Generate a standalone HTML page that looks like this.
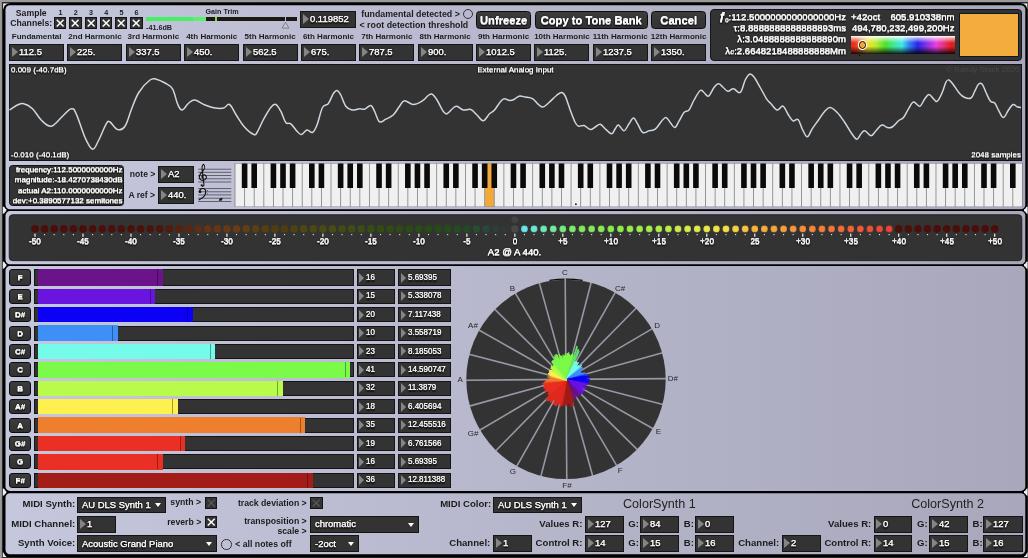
<!DOCTYPE html>
<html><head><meta charset="utf-8"><title>Tuner</title>
<style>
*{margin:0;padding:0;box-sizing:border-box}
html,body{width:1028px;height:558px;overflow:hidden;background:#000;font-family:"Liberation Sans",sans-serif}
#root{position:relative;width:1028px;height:558px;background:#000;overflow:hidden;will-change:transform}
.abs,.t,.nb,.dd,.btn,.cb,.panel{position:absolute}
.panel{background:linear-gradient(to right,#c5c7dd 0%,#a8a7b9 100%);border-radius:4px}
.t{white-space:nowrap;color:#1c1c1c;line-height:1}
.l8{font-size:8px;font-weight:bold}
.l7{font-size:7.2px;font-weight:bold}
.l87{font-size:8.7px;font-weight:bold}
.l9{font-size:9.6px;font-weight:bold}
.w8{font-size:8px;color:#fff;text-shadow:0 0.55px 0 rgba(255,255,255,.75),0 -0.3px 0 rgba(255,255,255,.4),0 0 1.5px #000,0 1.5px 1.5px #000}
.w9{font-size:9.6px;color:#fff;text-shadow:0 0.55px 0 rgba(255,255,255,.75),0 -0.3px 0 rgba(255,255,255,.4),0 0 1.5px #000,0 1.5px 1.5px #000}
.nb{background:#333;border:1px solid #151515;color:#fff;font-size:9.6px;overflow:hidden}
.nb i{position:absolute;left:1.8px;top:50%;margin-top:-5.3px;width:0;height:0;border-left:6.2px solid #858585;border-top:5.3px solid transparent;border-bottom:5.3px solid transparent}
.nb span{transform:scaleX(0.955);transform-origin:0 50%;position:absolute;left:8.8px;top:50%;margin-top:-6.5px;line-height:11px;font-size:9.9px;text-shadow:0 0.4px 0 rgba(255,255,255,.45),0 0 1.5px #000,0 1.5px 1.5px #000;white-space:nowrap;-webkit-text-stroke:0.25px #fff}

.nb.s span{font-size:8.6px;transform:scaleX(0.93);margin-top:-5.9px;left:8.6px;-webkit-text-stroke:0.2px #fff}
.nb.s i{margin-top:-5px;border-left-width:5.8px;border-top-width:5px;border-bottom-width:5px}
.dd{background:#333;border:1px solid #151515;color:#fff;font-size:9.6px;overflow:hidden}
.dd span{transform:scaleX(0.955);transform-origin:0 50%;position:absolute;left:3.6px;top:50%;margin-top:-5.9px;line-height:11px;font-size:9.9px;text-shadow:0 0.4px 0 rgba(255,255,255,.45),0 0 1.5px #000,0 1.5px 1.5px #000;white-space:nowrap;-webkit-text-stroke:0.25px #fff}
.dd i{position:absolute;right:4.2px;top:50%;margin-top:-1.8px;width:0;height:0;border-top:4.2px solid #fff;border-left:3.8px solid transparent;border-right:3.8px solid transparent}
.btn{background:linear-gradient(#3c3c3c,#323232);border:1px solid #0c0c0c;border-radius:3.5px;color:#fff;font-size:11.2px;font-weight:bold;text-align:center;text-shadow:0 0.55px 0 rgba(255,255,255,.75),0 -0.3px 0 rgba(255,255,255,.4),0 0 1.5px #000,0 1.5px 1.5px #000}
.cb{background:#333;border:1px solid #151515}
</style></head><body><div id="root">

<svg class="abs" style="left:0;top:0" width="1028" height="558" viewBox="0 0 1028 558"><defs><linearGradient id="pg" x1="0" y1="0" x2="1" y2="0"><stop offset="0" stop-color="#c5c7dd"/><stop offset="1" stop-color="#a8a7bb"/></linearGradient></defs><rect x="0" y="0" width="1028" height="558" fill="#000"/><rect x="0" y="0" width="1028" height="3.3" fill="#2a2a2a"/><rect x="0" y="0" width="3" height="558" fill="#2a2a2a"/><rect x="0" y="0" width="1028" height="2" fill="#9a9a9a"/><rect x="0" y="0" width="1.9" height="558" fill="#9a9a9a"/><rect x="1.9" y="557.3" width="1027" height="0.7" fill="#444"/><rect x="1027.3" y="2" width="0.7" height="556" fill="#444"/><rect x="3.1" y="3.4" width="6.5" height="5.5" fill="#ececf2"/><rect x="2.8" y="206.7" width="3.6" height="7" fill="#ececf2"/><rect x="2.8" y="261.7" width="3.6" height="7" fill="#ececf2"/><rect x="2.8" y="488.6" width="3.6" height="7" fill="#ececf2"/><rect x="1020.8" y="3.4" width="6.5" height="5.5" fill="#ececf2"/><rect x="1024" y="206.7" width="3.6" height="7" fill="#ececf2"/><rect x="1024" y="261.7" width="3.6" height="7" fill="#ececf2"/><rect x="1024" y="488.6" width="3.6" height="7" fill="#ececf2"/><rect x="2.8" y="552.5" width="3.6" height="4.5" fill="#ececf2"/><rect x="1024" y="552.5" width="3.6" height="4.5" fill="#ececf2"/><rect x="3.3" y="3.3000000000000003" width="1024.0" height="206.9" rx="6.3" fill="#000"/><rect x="5.5" y="5.2" width="1019.8" height="204.0" rx="4.4" fill="url(#pg)"/><rect x="3.3" y="210.1" width="1024.0" height="55.099999999999994" rx="6.3" fill="#000"/><rect x="5.5" y="211.1" width="1019.8" height="53.099999999999994" rx="4.4" fill="url(#pg)"/><rect x="3.3" y="265.1" width="1024.0" height="226.99999999999994" rx="6.3" fill="#000"/><rect x="5.5" y="266.1" width="1019.8" height="224.79999999999995" rx="4.4" fill="url(#pg)"/><rect x="3.3" y="492.1" width="1024.0" height="65.20000000000003" rx="6.3" fill="#000"/><rect x="5.5" y="493.3" width="1019.8" height="60.900000000000034" rx="4.4" fill="url(#pg)"/><rect x="9.2" y="214.7" width="1012.6" height="46" rx="3.5" fill="#333" stroke="#161616" stroke-width="0.8"/></svg>
<div class="t l9" style="left:15.8px;top:8.8px;font-size:8.7px">Sample</div>
<div class="t l9" style="left:10.2px;top:18.9px;font-size:8.7px">Channels:</div>
<div class="t l7" style="left:58.5px;top:8.5px;">1</div>
<div class="cb" style="left:54.2px;top:17px;width:12.3px;height:12.4px"><svg width="10.3" height="10.4" viewBox="0 0 10.5 10.5" style="position:absolute;left:0;top:0"><path d="M1.8 1.8L8.7 8.7M8.7 1.8L1.8 8.7" stroke="#fff" stroke-width="1.5"/></svg></div>
<div class="t l7" style="left:73.7px;top:8.5px;">2</div>
<div class="cb" style="left:69.4px;top:17px;width:12.3px;height:12.4px"><svg width="10.3" height="10.4" viewBox="0 0 10.5 10.5" style="position:absolute;left:0;top:0"><path d="M1.8 1.8L8.7 8.7M8.7 1.8L1.8 8.7" stroke="#fff" stroke-width="1.5"/></svg></div>
<div class="t l7" style="left:88.89999999999999px;top:8.5px;">3</div>
<div class="cb" style="left:84.6px;top:17px;width:12.3px;height:12.4px"><svg width="10.3" height="10.4" viewBox="0 0 10.5 10.5" style="position:absolute;left:0;top:0"><path d="M1.8 1.8L8.7 8.7M8.7 1.8L1.8 8.7" stroke="#fff" stroke-width="1.5"/></svg></div>
<div class="t l7" style="left:104.2px;top:8.5px;">4</div>
<div class="cb" style="left:99.9px;top:17px;width:12.3px;height:12.4px"><svg width="10.3" height="10.4" viewBox="0 0 10.5 10.5" style="position:absolute;left:0;top:0"><path d="M1.8 1.8L8.7 8.7M8.7 1.8L1.8 8.7" stroke="#fff" stroke-width="1.5"/></svg></div>
<div class="t l7" style="left:119.39999999999999px;top:8.5px;">5</div>
<div class="cb" style="left:115.1px;top:17px;width:12.3px;height:12.4px"><svg width="10.3" height="10.4" viewBox="0 0 10.5 10.5" style="position:absolute;left:0;top:0"><path d="M1.8 1.8L8.7 8.7M8.7 1.8L1.8 8.7" stroke="#fff" stroke-width="1.5"/></svg></div>
<div class="t l7" style="left:134.60000000000002px;top:8.5px;">6</div>
<div class="cb" style="left:130.3px;top:17px;width:12.3px;height:12.4px"><svg width="10.3" height="10.4" viewBox="0 0 10.5 10.5" style="position:absolute;left:0;top:0"><path d="M1.8 1.8L8.7 8.7M8.7 1.8L1.8 8.7" stroke="#fff" stroke-width="1.5"/></svg></div>
<div class="abs" style="left:146px;top:17px;width:138.7px;height:4px;background:#1a1a12"></div>
<div class="abs" style="left:286px;top:17px;width:11px;height:4px;background:#1a1a12"></div>
<div class="abs" style="left:146px;top:17px;width:47px;height:4px;background:#45f062"></div>
<div class="abs" style="left:193px;top:17px;width:13px;height:4px;background:#5af070"></div>
<div class="abs" style="left:215px;top:17px;width:2px;height:4px;background:#7ee040"></div>
<svg class="abs" style="left:281px;top:21px" width="9" height="8" viewBox="0 0 9 8"><path d="M4.5 1.2L7.9 7.1H1.1Z" fill="#c6c6d2" stroke="#80808a" stroke-width="1"/></svg>
<div class="t l7" style="left:205.5px;top:8.3px;">Gain Trim</div>
<div class="t l7" style="left:146px;top:24.1px;">-41.6dB</div>
<div class="nb" style="left:300.3px;top:11px;width:56px;height:17px;"><i></i><span>0.119852</span></div>
<div class="t l9" style="left:361.3px;top:9.8px;font-size:8.8px">fundamental detected &gt;</div>
<div class="t l9" style="left:359.5px;top:20.6px;font-size:8.8px">&lt; root detection threshold</div>
<div class="abs" style="left:462.5px;top:8.7px;width:10.5px;height:10.5px;border-radius:50%;border:1px solid #333"></div>
<div class="btn" style="left:476px;top:11px;width:55.3px;height:18px;line-height:16.5px">Unfreeze</div>
<div class="btn" style="left:534.5px;top:11px;width:113.5px;height:18px;line-height:16.5px">Copy to Tone Bank</div>
<div class="btn" style="left:651px;top:11px;width:55.3px;height:18px;line-height:16.5px">Cancel</div>
<div class="t l8" style="left:8.9px;top:33px;width:55.5px;text-align:center;">Fundamental</div>
<div class="nb" style="left:9px;top:44px;width:55px;height:17px;"><i></i><span>112.5</span></div>
<div class="t l8" style="left:67.25999999999999px;top:33px;width:55.5px;text-align:center;">2nd Harmonic</div>
<div class="nb" style="left:67px;top:44px;width:55px;height:17px;"><i></i><span>225.</span></div>
<div class="t l8" style="left:125.61999999999999px;top:33px;width:55.5px;text-align:center;">3rd Harmonic</div>
<div class="nb" style="left:126px;top:44px;width:55px;height:17px;"><i></i><span>337.5</span></div>
<div class="t l8" style="left:183.98px;top:33px;width:55.5px;text-align:center;">4th Harmonic</div>
<div class="nb" style="left:184px;top:44px;width:55px;height:17px;"><i></i><span>450.</span></div>
<div class="t l8" style="left:242.34px;top:33px;width:55.5px;text-align:center;">5th Harmonic</div>
<div class="nb" style="left:243px;top:44px;width:55px;height:17px;"><i></i><span>562.5</span></div>
<div class="t l8" style="left:300.70000000000005px;top:33px;width:55.5px;text-align:center;">6th Harmonic</div>
<div class="nb" style="left:301px;top:44px;width:55px;height:17px;"><i></i><span>675.</span></div>
<div class="t l8" style="left:359.06px;top:33px;width:55.5px;text-align:center;">7th Harmonic</div>
<div class="nb" style="left:359px;top:44px;width:55px;height:17px;"><i></i><span>787.5</span></div>
<div class="t l8" style="left:417.42px;top:33px;width:55.5px;text-align:center;">8th Harmonic</div>
<div class="nb" style="left:418px;top:44px;width:55px;height:17px;"><i></i><span>900.</span></div>
<div class="t l8" style="left:475.78000000000003px;top:33px;width:55.5px;text-align:center;">9th Harmonic</div>
<div class="nb" style="left:476px;top:44px;width:55px;height:17px;"><i></i><span>1012.5</span></div>
<div class="t l8" style="left:534.14px;top:33px;width:55.5px;text-align:center;">10th Harmonic</div>
<div class="nb" style="left:534px;top:44px;width:55px;height:17px;"><i></i><span>1125.</span></div>
<div class="t l8" style="left:592.5px;top:33px;width:55.5px;text-align:center;">11th Harmonic</div>
<div class="nb" style="left:593px;top:44px;width:55px;height:17px;"><i></i><span>1237.5</span></div>
<div class="t l8" style="left:650.86px;top:33px;width:55.5px;text-align:center;">12th Harmonic</div>
<div class="nb" style="left:651px;top:44px;width:55px;height:17px;"><i></i><span>1350.</span></div>
<div class="abs" style="left:709.7px;top:9px;width:312.5px;height:51.5px;background:#333;border:1px solid #151515;border-radius:4px"></div>
<div class="t w9" style="left:705px;top:11.9px;width:141px;text-align:right;font-size:9.58px;-webkit-text-stroke:0.2px #fff"><i style="font-weight:bold;font-size:11px;line-height:0">&#402;</i><span style="font-size:6px;line-height:0;position:relative;top:2px">0</span>:112.5000000000000000Hz</div>
<div class="t w9" style="left:705px;top:23.1px;width:141px;text-align:right;font-size:9.58px;-webkit-text-stroke:0.2px #fff">&tau;:8.8888888888888893ms</div>
<div class="t w9" style="left:705px;top:34.2px;width:141px;text-align:right;font-size:9.58px;-webkit-text-stroke:0.2px #fff">&lambda;:3.0488888888888890m</div>
<div class="t w9" style="left:705px;top:45.7px;width:141px;text-align:right;font-size:9.58px;-webkit-text-stroke:0.2px #fff">&lambda;<i style="font-size:8px;line-height:0">c</i>:2.6648218488888888Mm</div>
<div class="t w9" style="left:851px;top:11.9px;font-size:9.62px;-webkit-text-stroke:0.2px #fff">+42oct</div>
<div class="t w9" style="left:860px;top:11.9px;width:94.5px;text-align:right;font-size:9.62px;-webkit-text-stroke:0.2px #fff">605.910338nm</div>
<div class="t w9" style="left:850px;top:23.1px;width:104.5px;text-align:right;font-size:9.62px;-webkit-text-stroke:0.2px #fff">494,780,232,499,200Hz</div>
<div class="abs" style="left:851px;top:36px;width:103.5px;height:18px;background:linear-gradient(to bottom,#fff 0%,rgba(255,255,255,.55) 14%,rgba(255,255,255,0) 38%,rgba(0,0,0,0) 58%,rgba(0,0,0,.55) 85%,rgba(0,0,0,.9) 100%),linear-gradient(to right,#e8281c 0%,#ee3a20 5%,#f4e030 16%,#b8ec30 24%,#50e030 33%,#40e8a0 42%,#40e8e8 49%,#3080f0 56%,#2828e8 64%,#8030e8 72%,#e840e0 82%,#e83070 90%,#e02020 96%,#d82020 100%)"></div>
<div class="abs" style="left:859px;top:41.4px;width:7.4px;height:7.4px;border-radius:50%;background:#f4a838;border:1.2px solid #111;box-shadow:0 0 0 1.1px #fff"></div>
<div class="abs" style="left:858.5px;top:54.5px;width:1px;height:1.5px;background:#000"></div>
<div class="abs" style="left:959px;top:13px;width:59.5px;height:43.5px;background:#f4ac3c;border:1px solid #0c1830"></div>
<div class="abs" style="left:8.8px;top:63.8px;width:1013.4px;height:97.4px;background:#333;border:1px solid #151515"></div>
<svg class="abs" style="left:0;top:0" width="1028" height="165" viewBox="0 0 1028 165"><path d="M9.5 110.0C10.9 109.1 14.9 106.1 17.5 105.0C20.1 103.9 21.1 103.1 23.8 103.8C26.4 104.4 29.4 105.8 32.5 108.8C35.6 111.7 37.9 116.8 41.2 120.0C44.6 123.2 47.4 126.9 51.2 126.2C55.1 125.6 58.9 119.4 62.5 116.2C66.1 113.1 68.8 109.2 71.2 108.8C73.7 108.3 73.8 108.6 76.2 113.8C78.7 118.9 82.1 131.1 85.0 137.5C87.9 143.9 90.0 148.8 92.5 149.2C95.0 149.7 96.3 144.6 98.8 140.0C101.2 135.4 104.2 127.0 106.2 123.8C108.3 120.5 108.0 121.0 110.0 122.0C112.0 123.0 114.8 128.7 117.5 129.5C120.2 130.3 122.5 129.8 125.0 126.2C127.5 122.7 128.8 116.1 131.2 110.0C133.7 103.9 135.4 97.9 138.8 92.5C142.1 87.1 146.8 82.4 150.0 80.0C153.2 77.6 153.6 78.7 156.2 79.2C158.9 79.8 162.1 81.3 165.0 83.0C167.9 84.7 170.2 85.0 172.5 88.8C174.8 92.5 175.8 99.9 177.5 103.8C179.2 107.6 180.0 110.1 182.0 110.0C184.0 109.9 186.4 104.8 188.8 103.0C191.1 101.2 192.1 99.6 195.0 100.0C197.9 100.4 201.4 103.6 205.0 105.0C208.6 106.4 211.6 107.5 215.0 108.0C218.4 108.5 221.1 108.6 223.8 108.0C226.4 107.4 227.2 103.2 229.5 104.5C231.8 105.8 233.7 111.1 236.2 115.0C238.8 118.9 240.6 122.7 243.8 126.2C246.9 129.8 251.4 133.4 253.8 134.5C256.1 135.6 255.3 135.1 257.0 132.5C258.7 129.9 260.8 124.5 263.2 120.0C265.7 115.5 268.5 110.3 270.8 107.5C273.0 104.7 273.9 103.8 275.8 104.5C277.6 105.2 278.9 108.0 280.8 111.2C282.6 114.5 283.9 120.2 285.8 122.5C287.6 124.8 288.7 122.2 290.8 123.8C292.8 125.3 295.1 129.3 297.0 131.2C298.9 133.2 299.7 134.7 301.5 134.5C303.3 134.3 305.0 130.4 307.0 130.0C309.0 129.6 310.7 133.4 312.5 132.5C314.3 131.6 315.2 129.5 317.0 125.0C318.8 120.5 320.5 111.3 322.5 107.5C324.5 103.7 326.3 106.2 328.2 103.8C330.2 101.3 331.7 96.1 333.2 93.8C334.8 91.4 335.6 90.3 337.0 90.5C338.4 90.7 339.2 92.2 340.8 95.0C342.3 97.8 343.7 103.5 345.8 106.2C347.8 109.0 349.5 109.5 352.0 110.0C354.5 110.5 357.2 108.9 359.5 108.8C361.8 108.6 362.5 109.8 364.5 109.2C366.5 108.7 368.9 105.1 370.8 105.5C372.6 105.9 372.9 108.3 374.5 111.2C376.1 114.2 377.5 120.3 379.5 121.8C381.5 123.2 383.3 120.5 385.8 119.2C388.2 118.0 390.8 117.3 393.2 115.0C395.7 112.7 397.5 108.8 399.5 106.2C401.5 103.7 402.0 101.1 404.5 100.8C407.0 100.4 410.1 104.4 413.2 104.5C416.4 104.6 419.3 102.9 422.0 101.2C424.7 99.6 426.4 96.8 428.2 95.5C430.1 94.2 430.4 93.4 432.0 94.2C433.6 95.1 435.0 96.9 437.0 100.0C439.0 103.1 441.4 108.8 443.2 111.2C445.1 113.7 445.2 114.3 447.0 113.8C448.8 113.2 451.4 109.3 453.2 108.0C455.1 106.7 455.2 105.9 457.0 106.2C458.8 106.6 460.8 109.4 463.2 110.0C465.7 110.6 468.3 108.6 470.8 109.5C473.2 110.4 474.8 113.0 477.0 115.0C479.2 117.0 481.0 121.0 483.2 120.8C485.5 120.5 487.5 115.7 489.5 113.8C491.5 111.8 492.5 112.2 494.5 110.0C496.5 107.8 498.9 103.3 500.8 101.2C502.6 99.2 502.9 98.9 504.5 98.8C506.1 98.6 507.8 100.4 509.5 100.5C511.2 100.6 512.3 100.3 514.0 99.5C515.7 98.7 517.0 96.7 519.0 96.2C521.0 95.8 522.8 96.5 525.2 97.0C527.7 97.5 530.5 97.5 532.8 98.8C535.0 100.0 536.0 102.3 537.8 103.8C539.5 105.2 540.7 107.2 542.8 107.0C544.8 106.8 546.5 104.6 549.0 102.5C551.5 100.4 554.2 97.3 556.5 95.5C558.8 93.7 559.9 92.4 561.5 92.5C563.1 92.6 563.7 93.1 565.2 96.2C566.8 99.4 568.5 105.3 570.2 110.0C572.0 114.7 573.8 119.6 575.2 122.5C576.7 125.4 576.9 125.7 578.5 126.2C580.1 126.8 581.9 124.9 584.0 125.5C586.1 126.1 588.2 129.2 590.2 129.5C592.3 129.8 593.5 127.9 595.2 127.0C597.0 126.1 598.5 123.9 600.2 124.2C602.0 124.6 603.2 127.0 605.2 128.8C607.3 130.5 609.7 133.8 611.5 133.8C613.3 133.8 614.0 130.3 615.2 128.8C616.5 127.2 616.9 124.6 618.5 125.0C620.1 125.4 622.1 131.0 624.0 130.8C625.9 130.5 627.3 126.0 629.0 123.8C630.7 121.5 631.9 117.9 633.5 118.0C635.1 118.1 636.1 121.6 637.8 124.2C639.4 126.9 640.7 131.3 642.8 132.5C644.8 133.7 646.8 131.3 649.0 130.8C651.2 130.2 653.0 131.0 655.2 129.2C657.5 127.5 659.6 123.4 661.5 121.2C663.4 119.1 664.4 117.3 666.0 117.5C667.6 117.7 668.7 120.7 670.2 122.5C671.8 124.3 673.2 127.7 674.8 127.5C676.3 127.3 677.3 124.0 679.0 121.2C680.7 118.5 682.2 114.5 684.0 112.5C685.8 110.5 687.2 112.2 689.0 110.0C690.8 107.8 692.0 103.5 694.0 100.0C696.0 96.5 698.5 91.8 700.2 90.5C702.0 89.2 702.5 91.5 704.0 92.5C705.5 93.5 706.7 97.2 708.5 96.2C710.3 95.3 712.2 89.8 714.0 87.5C715.8 85.2 716.9 83.8 718.5 83.8C720.1 83.7 721.1 85.7 722.8 87.0C724.4 88.3 725.8 90.9 727.8 91.2C729.7 91.6 731.2 88.5 733.5 88.8C735.8 89.0 738.1 94.1 740.2 92.5C742.4 90.9 743.6 83.3 745.2 80.0C746.9 76.7 747.9 74.8 749.5 74.2C751.1 73.7 752.1 74.6 754.0 77.0C755.9 79.4 758.0 83.6 760.2 87.5C762.5 91.4 764.6 95.8 766.5 98.8C768.4 101.7 769.1 101.7 771.0 103.8C772.9 105.8 775.1 109.5 777.2 110.0C779.4 110.5 781.0 105.3 783.0 106.2C785.0 107.2 786.7 112.4 788.5 115.0C790.3 117.6 791.3 119.9 793.0 120.8C794.7 121.6 796.3 118.1 798.0 119.5C799.7 120.9 800.6 125.6 802.2 128.8C803.9 131.9 805.5 136.8 807.2 136.8C809.0 136.8 810.2 131.8 812.2 128.8C814.3 125.7 816.2 123.2 818.5 120.0C820.8 116.8 822.6 113.5 824.8 111.2C826.9 109.0 828.0 107.3 830.2 107.5C832.5 107.7 834.6 109.8 837.2 112.5C839.9 115.2 842.3 118.9 844.8 122.5C847.2 126.1 848.8 129.5 851.0 132.5C853.2 135.5 855.0 139.0 856.8 139.2C858.5 139.5 859.6 135.3 861.0 133.8C862.4 132.2 863.0 130.4 864.8 130.8C866.5 131.1 869.0 135.8 871.0 135.8C873.0 135.8 874.1 132.7 876.0 130.8C877.9 128.8 879.7 125.6 881.8 125.0C883.8 124.4 885.4 127.1 887.2 127.5C889.1 127.9 890.2 128.2 892.2 127.0C894.3 125.8 896.5 122.5 898.5 120.8C900.5 119.0 901.7 119.7 903.5 117.5C905.3 115.3 906.7 111.5 908.5 108.8C910.3 106.0 911.5 102.5 913.5 102.0C915.5 101.5 917.7 106.8 919.8 106.2C921.8 105.7 923.1 100.9 924.8 98.8C926.4 96.6 927.4 94.5 929.0 94.5C930.6 94.5 932.0 97.5 933.5 98.8C935.0 100.0 935.7 102.4 937.2 101.2C938.8 100.1 940.7 96.0 942.2 92.5C943.8 89.0 944.8 84.2 946.0 82.0C947.2 79.8 947.6 79.5 949.0 80.0C950.4 80.5 951.6 82.5 953.5 85.0C955.4 87.5 957.7 91.5 959.8 93.8C961.8 96.0 962.7 96.7 964.8 97.5C966.8 98.3 969.2 99.1 971.0 98.0C972.8 96.9 973.4 93.7 974.8 91.2C976.1 88.8 977.1 85.5 978.5 84.2C979.9 83.0 980.9 82.8 982.2 84.2C983.6 85.7 984.5 89.4 986.0 92.5C987.5 95.6 988.9 99.4 990.5 101.2C992.1 103.1 993.2 101.2 994.8 103.0C996.3 104.8 997.4 108.6 999.0 111.2C1000.6 113.9 1001.8 117.7 1003.5 117.5C1005.2 117.3 1006.8 112.3 1008.5 110.0C1010.2 107.7 1011.4 105.1 1013.0 104.5C1014.6 103.9 1015.8 106.2 1017.2 106.8C1018.7 107.3 1020.3 107.4 1021.0 107.5" fill="none" stroke="#ced7df" stroke-width="1.5" stroke-linejoin="round"/></svg>
<div class="t w8" style="left:11px;top:66.3px;">0.009 (-40.7dB)</div>
<div class="t w8" style="left:11px;top:151.3px;">-0.010 (-40.1dB)</div>
<div class="t w8" style="left:477.5px;top:66.3px;">External Analog Input</div>
<div class="t w8" style="left:921px;top:151.3px;width:100px;text-align:right;">2048 samples</div>
<div class="t l8" style="left:919.5px;top:66.3px;width:100px;text-align:right;font-weight:normal;color:#484848">&copy; Randy Stack 2020</div>
<div class="abs" style="left:9.3px;top:164.5px;width:115.2px;height:41px;background:#333;border:1px solid #151515;border-radius:3.5px"></div>
<div class="t w8" style="left:8px;top:165.8px;width:114.5px;text-align:right;-webkit-text-stroke:0.2px #fff;letter-spacing:0">frequency:112.5000000000Hz</div>
<div class="t w8" style="left:8px;top:176.3px;width:114.5px;text-align:right;-webkit-text-stroke:0.2px #fff;letter-spacing:0">magnitude:-18.4270738430dB</div>
<div class="t w8" style="left:8px;top:186.8px;width:114.5px;text-align:right;-webkit-text-stroke:0.2px #fff;letter-spacing:0">actual A2:110.0000000000Hz</div>
<div class="t w8" style="left:8px;top:197.3px;width:114.5px;text-align:right;-webkit-text-stroke:0.2px #fff;letter-spacing:0">dev:+0.3890577132 semitones</div>
<div class="t l8" style="left:129.8px;top:170px;font-size:8.6px">note &gt;</div>
<div class="t l8" style="left:128.4px;top:191px;font-size:8.6px">A ref &gt;</div>
<div class="nb" style="left:158.2px;top:166px;width:36.3px;height:16.7px;"><i></i><span>A2</span></div>
<div class="nb" style="left:158.2px;top:187.1px;width:36.3px;height:16.7px;"><i></i><span>440.</span></div>
<svg class="abs" style="left:196px;top:162px" width="38" height="46" viewBox="196 162 38 46"><rect x="198.1" y="168.75" width="33.2" height="0.9" fill="#555560"/><rect x="198.1" y="171.85000000000002" width="33.2" height="0.9" fill="#555560"/><rect x="198.1" y="175.05" width="33.2" height="0.9" fill="#555560"/><rect x="198.1" y="178.35000000000002" width="33.2" height="0.9" fill="#555560"/><rect x="198.1" y="181.55" width="33.2" height="0.9" fill="#555560"/><rect x="198.1" y="188.15" width="33.2" height="0.9" fill="#555560"/><rect x="198.1" y="191.35000000000002" width="33.2" height="0.9" fill="#555560"/><rect x="198.1" y="194.45000000000002" width="33.2" height="0.9" fill="#555560"/><rect x="198.1" y="197.75" width="33.2" height="0.9" fill="#555560"/><rect x="198.1" y="201.05" width="33.2" height="0.9" fill="#555560"/><path d="M201.8 185.600C202.5 186.900 204.400 186.300 203.900 184L202.200 170.500C201.800 167.500 202.600 164.800 203.600 164.300C205 165.500 205 168.300 203.200 170.600C201 173.300 199 174.800 199.300 177.300C199.600 179.600 201.800 180.800 203.800 180.300C205.800 179.800 206.800 178.100 206.300 176.500C205.800 175 204.300 174.500 203 175C201.800 175.600 201.600 177 202.400 177.900" fill="none" stroke="#0e0e0e" stroke-width="1.05" stroke-linecap="round" stroke-linejoin="round"/><circle cx="201.700" cy="185.200" r="1.050" fill="#0e0e0e"/><path d="M199.500 191.900c.1-2.300 1.700-3.500 3.500-3.400 1.900.1 2.900 1.700 2.700 4-.3 3.100-2.800 5.500-6.500 7.300" fill="none" stroke="#0e0e0e" stroke-width="1.150" stroke-linecap="round"/><circle cx="200.100" cy="191.800" r="1.250" fill="#0e0e0e"/><circle cx="207.400" cy="190.600" r="0.550" fill="#444"/><circle cx="207.400" cy="193.700" r="0.550" fill="#444"/><path d="M219.100 200.500L219.900 198.500L222.400 198.300L221.500 200.400Z" fill="#0e0e0e" stroke="#0e0e0e" stroke-width="0.400" stroke-linejoin="round"/></svg>
<svg class="abs" style="left:0;top:0" width="1028" height="210" viewBox="0 0 1028 210"><rect x="234.5" y="163.2" width="788.4" height="43.800" fill="#888c90"/><rect x="235.45" y="163.7" width="8.70" height="42.8" fill="#f0f0f0"/><rect x="245.05" y="163.7" width="8.70" height="42.8" fill="#f0f0f0"/><rect x="254.65" y="163.7" width="8.70" height="42.8" fill="#f0f0f0"/><rect x="264.26" y="163.7" width="8.70" height="42.8" fill="#f0f0f0"/><rect x="273.86" y="163.7" width="8.70" height="42.8" fill="#f0f0f0"/><rect x="283.46" y="163.7" width="8.70" height="42.8" fill="#f0f0f0"/><rect x="293.06" y="163.7" width="8.70" height="42.8" fill="#f0f0f0"/><rect x="302.67" y="163.7" width="8.70" height="42.8" fill="#f0f0f0"/><rect x="312.27" y="163.7" width="8.70" height="42.8" fill="#f0f0f0"/><rect x="321.87" y="163.7" width="8.70" height="42.8" fill="#f0f0f0"/><rect x="331.47" y="163.7" width="8.70" height="42.8" fill="#f0f0f0"/><rect x="341.08" y="163.7" width="8.70" height="42.8" fill="#f0f0f0"/><rect x="350.68" y="163.7" width="8.70" height="42.8" fill="#f0f0f0"/><rect x="360.28" y="163.7" width="8.70" height="42.8" fill="#f0f0f0"/><rect x="369.88" y="163.7" width="8.70" height="42.8" fill="#f0f0f0"/><rect x="379.49" y="163.7" width="8.70" height="42.8" fill="#f0f0f0"/><rect x="389.09" y="163.7" width="8.70" height="42.8" fill="#f0f0f0"/><rect x="398.69" y="163.7" width="8.70" height="42.8" fill="#f0f0f0"/><rect x="408.29" y="163.7" width="8.70" height="42.8" fill="#f0f0f0"/><rect x="417.90" y="163.7" width="8.70" height="42.8" fill="#f0f0f0"/><rect x="427.50" y="163.7" width="8.70" height="42.8" fill="#f0f0f0"/><rect x="437.10" y="163.7" width="8.70" height="42.8" fill="#f0f0f0"/><rect x="446.70" y="163.7" width="8.70" height="42.8" fill="#f0f0f0"/><rect x="456.31" y="163.7" width="8.70" height="42.8" fill="#f0f0f0"/><rect x="465.91" y="163.7" width="8.70" height="42.8" fill="#f0f0f0"/><rect x="475.51" y="163.7" width="8.70" height="42.8" fill="#f0f0f0"/><rect x="485.11" y="163.7" width="8.70" height="42.8" fill="#f4a838"/><rect x="494.72" y="163.7" width="8.70" height="42.8" fill="#f0f0f0"/><rect x="504.32" y="163.7" width="8.70" height="42.8" fill="#f0f0f0"/><rect x="513.92" y="163.7" width="8.70" height="42.8" fill="#f0f0f0"/><rect x="523.52" y="163.7" width="8.70" height="42.8" fill="#f0f0f0"/><rect x="533.13" y="163.7" width="8.70" height="42.8" fill="#f0f0f0"/><rect x="542.73" y="163.7" width="8.70" height="42.8" fill="#f0f0f0"/><rect x="552.33" y="163.7" width="8.70" height="42.8" fill="#f0f0f0"/><rect x="561.93" y="163.7" width="8.70" height="42.8" fill="#f0f0f0"/><rect x="571.54" y="163.7" width="8.70" height="42.8" fill="#f0f0f0"/><rect x="581.14" y="163.7" width="8.70" height="42.8" fill="#f0f0f0"/><rect x="590.74" y="163.7" width="8.70" height="42.8" fill="#f0f0f0"/><rect x="600.34" y="163.7" width="8.70" height="42.8" fill="#f0f0f0"/><rect x="609.95" y="163.7" width="8.70" height="42.8" fill="#f0f0f0"/><rect x="619.55" y="163.7" width="8.70" height="42.8" fill="#f0f0f0"/><rect x="629.15" y="163.7" width="8.70" height="42.8" fill="#f0f0f0"/><rect x="638.75" y="163.7" width="8.70" height="42.8" fill="#f0f0f0"/><rect x="648.35" y="163.7" width="8.70" height="42.8" fill="#f0f0f0"/><rect x="657.96" y="163.7" width="8.70" height="42.8" fill="#f0f0f0"/><rect x="667.56" y="163.7" width="8.70" height="42.8" fill="#f0f0f0"/><rect x="677.16" y="163.7" width="8.70" height="42.8" fill="#f0f0f0"/><rect x="686.76" y="163.7" width="8.70" height="42.8" fill="#f0f0f0"/><rect x="696.37" y="163.7" width="8.70" height="42.8" fill="#f0f0f0"/><rect x="705.97" y="163.7" width="8.70" height="42.8" fill="#f0f0f0"/><rect x="715.57" y="163.7" width="8.70" height="42.8" fill="#f0f0f0"/><rect x="725.17" y="163.7" width="8.70" height="42.8" fill="#f0f0f0"/><rect x="734.78" y="163.7" width="8.70" height="42.8" fill="#f0f0f0"/><rect x="744.38" y="163.7" width="8.70" height="42.8" fill="#f0f0f0"/><rect x="753.98" y="163.7" width="8.70" height="42.8" fill="#f0f0f0"/><rect x="763.58" y="163.7" width="8.70" height="42.8" fill="#f0f0f0"/><rect x="773.19" y="163.7" width="8.70" height="42.8" fill="#f0f0f0"/><rect x="782.79" y="163.7" width="8.70" height="42.8" fill="#f0f0f0"/><rect x="792.39" y="163.7" width="8.70" height="42.8" fill="#f0f0f0"/><rect x="801.99" y="163.7" width="8.70" height="42.8" fill="#f0f0f0"/><rect x="811.60" y="163.7" width="8.70" height="42.8" fill="#f0f0f0"/><rect x="821.20" y="163.7" width="8.70" height="42.8" fill="#f0f0f0"/><rect x="830.80" y="163.7" width="8.70" height="42.8" fill="#f0f0f0"/><rect x="840.40" y="163.7" width="8.70" height="42.8" fill="#f0f0f0"/><rect x="850.01" y="163.7" width="8.70" height="42.8" fill="#f0f0f0"/><rect x="859.61" y="163.7" width="8.70" height="42.8" fill="#f0f0f0"/><rect x="869.21" y="163.7" width="8.70" height="42.8" fill="#f0f0f0"/><rect x="878.81" y="163.7" width="8.70" height="42.8" fill="#f0f0f0"/><rect x="888.42" y="163.7" width="8.70" height="42.8" fill="#f0f0f0"/><rect x="898.02" y="163.7" width="8.70" height="42.8" fill="#f0f0f0"/><rect x="907.62" y="163.7" width="8.70" height="42.8" fill="#f0f0f0"/><rect x="917.22" y="163.7" width="8.70" height="42.8" fill="#f0f0f0"/><rect x="926.83" y="163.7" width="8.70" height="42.8" fill="#f0f0f0"/><rect x="936.43" y="163.7" width="8.70" height="42.8" fill="#f0f0f0"/><rect x="946.03" y="163.7" width="8.70" height="42.8" fill="#f0f0f0"/><rect x="955.63" y="163.7" width="8.70" height="42.8" fill="#f0f0f0"/><rect x="965.24" y="163.7" width="8.70" height="42.8" fill="#f0f0f0"/><rect x="974.84" y="163.7" width="8.70" height="42.8" fill="#f0f0f0"/><rect x="984.44" y="163.7" width="8.70" height="42.8" fill="#f0f0f0"/><rect x="994.04" y="163.7" width="8.70" height="42.8" fill="#f0f0f0"/><rect x="1003.65" y="163.7" width="8.70" height="42.8" fill="#f0f0f0"/><rect x="1013.25" y="163.7" width="8.70" height="42.8" fill="#f0f0f0"/><rect x="241.80" y="163.5" width="5.6" height="24.5" fill="#0c0a08"/><rect x="251.40" y="163.5" width="5.6" height="24.5" fill="#0c0a08"/><rect x="270.61" y="163.5" width="5.6" height="24.5" fill="#0c0a08"/><rect x="280.21" y="163.5" width="5.6" height="24.5" fill="#0c0a08"/><rect x="289.81" y="163.5" width="5.6" height="24.5" fill="#0c0a08"/><rect x="309.02" y="163.5" width="5.6" height="24.5" fill="#0c0a08"/><rect x="318.62" y="163.5" width="5.6" height="24.5" fill="#0c0a08"/><rect x="337.83" y="163.5" width="5.6" height="24.5" fill="#0c0a08"/><rect x="347.43" y="163.5" width="5.6" height="24.5" fill="#0c0a08"/><rect x="357.03" y="163.5" width="5.6" height="24.5" fill="#0c0a08"/><rect x="376.24" y="163.5" width="5.6" height="24.5" fill="#0c0a08"/><rect x="385.84" y="163.5" width="5.6" height="24.5" fill="#0c0a08"/><rect x="405.04" y="163.5" width="5.6" height="24.5" fill="#0c0a08"/><rect x="414.65" y="163.5" width="5.6" height="24.5" fill="#0c0a08"/><rect x="424.25" y="163.5" width="5.6" height="24.5" fill="#0c0a08"/><rect x="443.45" y="163.5" width="5.6" height="24.5" fill="#0c0a08"/><rect x="453.06" y="163.5" width="5.6" height="24.5" fill="#0c0a08"/><rect x="472.26" y="163.5" width="5.6" height="24.5" fill="#0c0a08"/><rect x="481.86" y="163.5" width="5.6" height="24.5" fill="#0c0a08"/><rect x="491.47" y="163.5" width="5.6" height="24.5" fill="#0c0a08"/><rect x="510.67" y="163.5" width="5.6" height="24.5" fill="#0c0a08"/><rect x="520.27" y="163.5" width="5.6" height="24.5" fill="#0c0a08"/><rect x="539.48" y="163.5" width="5.6" height="24.5" fill="#0c0a08"/><rect x="549.08" y="163.5" width="5.6" height="24.5" fill="#0c0a08"/><rect x="558.68" y="163.5" width="5.6" height="24.5" fill="#0c0a08"/><rect x="577.89" y="163.5" width="5.6" height="24.5" fill="#0c0a08"/><rect x="587.49" y="163.5" width="5.6" height="24.5" fill="#0c0a08"/><rect x="606.70" y="163.5" width="5.6" height="24.5" fill="#0c0a08"/><rect x="616.30" y="163.5" width="5.6" height="24.5" fill="#0c0a08"/><rect x="625.90" y="163.5" width="5.6" height="24.5" fill="#0c0a08"/><rect x="645.10" y="163.5" width="5.6" height="24.5" fill="#0c0a08"/><rect x="654.71" y="163.5" width="5.6" height="24.5" fill="#0c0a08"/><rect x="673.91" y="163.5" width="5.6" height="24.5" fill="#0c0a08"/><rect x="683.51" y="163.5" width="5.6" height="24.5" fill="#0c0a08"/><rect x="693.12" y="163.5" width="5.6" height="24.5" fill="#0c0a08"/><rect x="712.32" y="163.5" width="5.6" height="24.5" fill="#0c0a08"/><rect x="721.92" y="163.5" width="5.6" height="24.5" fill="#0c0a08"/><rect x="741.13" y="163.5" width="5.6" height="24.5" fill="#0c0a08"/><rect x="750.73" y="163.5" width="5.6" height="24.5" fill="#0c0a08"/><rect x="760.33" y="163.5" width="5.6" height="24.5" fill="#0c0a08"/><rect x="779.54" y="163.5" width="5.6" height="24.5" fill="#0c0a08"/><rect x="789.14" y="163.5" width="5.6" height="24.5" fill="#0c0a08"/><rect x="808.35" y="163.5" width="5.6" height="24.5" fill="#0c0a08"/><rect x="817.95" y="163.5" width="5.6" height="24.5" fill="#0c0a08"/><rect x="827.55" y="163.5" width="5.6" height="24.5" fill="#0c0a08"/><rect x="846.76" y="163.5" width="5.6" height="24.5" fill="#0c0a08"/><rect x="856.36" y="163.5" width="5.6" height="24.5" fill="#0c0a08"/><rect x="875.56" y="163.5" width="5.6" height="24.5" fill="#0c0a08"/><rect x="885.17" y="163.5" width="5.6" height="24.5" fill="#0c0a08"/><rect x="894.77" y="163.5" width="5.6" height="24.5" fill="#0c0a08"/><rect x="913.97" y="163.5" width="5.6" height="24.5" fill="#0c0a08"/><rect x="923.58" y="163.5" width="5.6" height="24.5" fill="#0c0a08"/><rect x="942.78" y="163.5" width="5.6" height="24.5" fill="#0c0a08"/><rect x="952.38" y="163.5" width="5.6" height="24.5" fill="#0c0a08"/><rect x="961.99" y="163.5" width="5.6" height="24.5" fill="#0c0a08"/><rect x="981.19" y="163.5" width="5.6" height="24.5" fill="#0c0a08"/><rect x="990.79" y="163.5" width="5.6" height="24.5" fill="#0c0a08"/><rect x="1010.00" y="163.5" width="5.6" height="24.5" fill="#0c0a08"/><circle cx="575.9" cy="204.200" r="0.900" fill="#111"/></svg>
<svg class="abs" style="left:0;top:212px" width="1028" height="52" viewBox="0 212 1028 52"><circle cx="35.00" cy="228.900" r="3.800" fill="rgb(74,15,12)"/><rect x="34.40" y="233.6" width="1.2" height="3.2" fill="#f0f0f0"/><circle cx="44.60" cy="228.900" r="3.800" fill="rgb(74,15,12)"/><rect x="44.05" y="234" width="1.100" height="1.200" fill="#e0e0e0"/><circle cx="54.19" cy="228.900" r="3.800" fill="rgb(74,15,12)"/><rect x="53.64" y="234" width="1.100" height="1.200" fill="#e0e0e0"/><circle cx="63.79" cy="228.900" r="3.800" fill="rgb(74,15,12)"/><rect x="63.24" y="234" width="1.100" height="1.200" fill="#e0e0e0"/><circle cx="73.39" cy="228.900" r="3.800" fill="rgb(74,15,12)"/><rect x="72.84" y="234" width="1.100" height="1.200" fill="#e0e0e0"/><circle cx="82.98" cy="228.900" r="3.800" fill="rgb(74,15,12)"/><rect x="82.39" y="233.6" width="1.2" height="3.2" fill="#f0f0f0"/><circle cx="92.58" cy="228.900" r="3.800" fill="rgb(74,15,12)"/><rect x="92.03" y="234" width="1.100" height="1.200" fill="#e0e0e0"/><circle cx="102.18" cy="228.900" r="3.800" fill="rgb(74,16,12)"/><rect x="101.63" y="234" width="1.100" height="1.200" fill="#e0e0e0"/><circle cx="111.78" cy="228.900" r="3.800" fill="rgb(74,16,12)"/><rect x="111.23" y="234" width="1.100" height="1.200" fill="#e0e0e0"/><circle cx="121.37" cy="228.900" r="3.800" fill="rgb(74,16,12)"/><rect x="120.82" y="234" width="1.100" height="1.200" fill="#e0e0e0"/><circle cx="130.97" cy="228.900" r="3.800" fill="rgb(74,16,12)"/><rect x="130.37" y="233.6" width="1.2" height="3.2" fill="#f0f0f0"/><circle cx="140.57" cy="228.900" r="3.800" fill="rgb(74,18,13)"/><rect x="140.02" y="234" width="1.100" height="1.200" fill="#e0e0e0"/><circle cx="150.16" cy="228.900" r="3.800" fill="rgb(75,20,13)"/><rect x="149.61" y="234" width="1.100" height="1.200" fill="#e0e0e0"/><circle cx="159.76" cy="228.900" r="3.800" fill="rgb(76,22,13)"/><rect x="159.21" y="234" width="1.100" height="1.200" fill="#e0e0e0"/><circle cx="169.36" cy="228.900" r="3.800" fill="rgb(81,27,14)"/><rect x="168.81" y="234" width="1.100" height="1.200" fill="#e0e0e0"/><circle cx="178.95" cy="228.900" r="3.800" fill="rgb(86,32,14)"/><rect x="178.35" y="233.6" width="1.2" height="3.2" fill="#f0f0f0"/><circle cx="188.55" cy="228.900" r="3.800" fill="rgb(91,38,16)"/><rect x="188.00" y="234" width="1.100" height="1.200" fill="#e0e0e0"/><circle cx="198.15" cy="228.900" r="3.800" fill="rgb(96,44,18)"/><rect x="197.60" y="234" width="1.100" height="1.200" fill="#e0e0e0"/><circle cx="207.75" cy="228.900" r="3.800" fill="rgb(101,50,19)"/><rect x="207.20" y="234" width="1.100" height="1.200" fill="#e0e0e0"/><circle cx="217.34" cy="228.900" r="3.800" fill="rgb(101,53,20)"/><rect x="216.79" y="234" width="1.100" height="1.200" fill="#e0e0e0"/><circle cx="226.94" cy="228.900" r="3.800" fill="rgb(102,57,20)"/><rect x="226.34" y="233.6" width="1.2" height="3.2" fill="#f0f0f0"/><circle cx="236.54" cy="228.900" r="3.800" fill="rgb(102,60,20)"/><rect x="235.99" y="234" width="1.100" height="1.200" fill="#e0e0e0"/><circle cx="246.13" cy="228.900" r="3.800" fill="rgb(97,61,20)"/><rect x="245.58" y="234" width="1.100" height="1.200" fill="#e0e0e0"/><circle cx="255.73" cy="228.900" r="3.800" fill="rgb(93,61,19)"/><rect x="255.18" y="234" width="1.100" height="1.200" fill="#e0e0e0"/><circle cx="265.33" cy="228.900" r="3.800" fill="rgb(88,60,18)"/><rect x="264.78" y="234" width="1.100" height="1.200" fill="#e0e0e0"/><circle cx="274.92" cy="228.900" r="3.800" fill="rgb(84,60,18)"/><rect x="274.32" y="233.6" width="1.2" height="3.2" fill="#f0f0f0"/><circle cx="284.52" cy="228.900" r="3.800" fill="rgb(79,61,18)"/><rect x="283.97" y="234" width="1.100" height="1.200" fill="#e0e0e0"/><circle cx="294.12" cy="228.900" r="3.800" fill="rgb(78,66,19)"/><rect x="293.57" y="234" width="1.100" height="1.200" fill="#e0e0e0"/><circle cx="303.72" cy="228.900" r="3.800" fill="rgb(78,70,19)"/><rect x="303.17" y="234" width="1.100" height="1.200" fill="#e0e0e0"/><circle cx="313.31" cy="228.900" r="3.800" fill="rgb(76,72,20)"/><rect x="312.76" y="234" width="1.100" height="1.200" fill="#e0e0e0"/><circle cx="322.91" cy="228.900" r="3.800" fill="rgb(74,74,20)"/><rect x="322.31" y="233.6" width="1.2" height="3.2" fill="#f0f0f0"/><circle cx="332.51" cy="228.900" r="3.800" fill="rgb(71,75,20)"/><rect x="331.96" y="234" width="1.100" height="1.200" fill="#e0e0e0"/><circle cx="342.10" cy="228.900" r="3.800" fill="rgb(67,75,20)"/><rect x="341.55" y="234" width="1.100" height="1.200" fill="#e0e0e0"/><circle cx="351.70" cy="228.900" r="3.800" fill="rgb(64,76,20)"/><rect x="351.15" y="234" width="1.100" height="1.200" fill="#e0e0e0"/><circle cx="361.30" cy="228.900" r="3.800" fill="rgb(59,76,20)"/><rect x="360.75" y="234" width="1.100" height="1.200" fill="#e0e0e0"/><circle cx="370.89" cy="228.900" r="3.800" fill="rgb(54,76,20)"/><rect x="370.29" y="233.6" width="1.2" height="3.2" fill="#f0f0f0"/><circle cx="380.49" cy="228.900" r="3.800" fill="rgb(51,76,20)"/><rect x="379.94" y="234" width="1.100" height="1.200" fill="#e0e0e0"/><circle cx="390.09" cy="228.900" r="3.800" fill="rgb(48,76,20)"/><rect x="389.54" y="234" width="1.100" height="1.200" fill="#e0e0e0"/><circle cx="399.69" cy="228.900" r="3.800" fill="rgb(46,75,20)"/><rect x="399.14" y="234" width="1.100" height="1.200" fill="#e0e0e0"/><circle cx="409.28" cy="228.900" r="3.800" fill="rgb(43,75,20)"/><rect x="408.73" y="234" width="1.100" height="1.200" fill="#e0e0e0"/><circle cx="418.88" cy="228.900" r="3.800" fill="rgb(41,75,20)"/><rect x="418.28" y="233.6" width="1.2" height="3.2" fill="#f0f0f0"/><circle cx="428.48" cy="228.900" r="3.800" fill="rgb(40,75,22)"/><rect x="427.93" y="234" width="1.100" height="1.200" fill="#e0e0e0"/><circle cx="438.07" cy="228.900" r="3.800" fill="rgb(39,75,24)"/><rect x="437.52" y="234" width="1.100" height="1.200" fill="#e0e0e0"/><circle cx="447.67" cy="228.900" r="3.800" fill="rgb(38,75,26)"/><rect x="447.12" y="234" width="1.100" height="1.200" fill="#e0e0e0"/><circle cx="457.27" cy="228.900" r="3.800" fill="rgb(37,75,32)"/><rect x="456.72" y="234" width="1.100" height="1.200" fill="#e0e0e0"/><circle cx="466.86" cy="228.900" r="3.800" fill="rgb(35,74,38)"/><rect x="466.26" y="233.6" width="1.2" height="3.2" fill="#f0f0f0"/><circle cx="476.46" cy="228.900" r="3.600" fill="rgb(35,79,48)"/><rect x="475.91" y="234" width="1.100" height="1.200" fill="#e0e0e0"/><circle cx="486.06" cy="228.900" r="3.600" fill="rgb(38,73,56)"/><rect x="485.51" y="234" width="1.100" height="1.200" fill="#e0e0e0"/><circle cx="495.66" cy="228.900" r="3.600" fill="rgb(44,62,56)"/><rect x="495.11" y="234" width="1.100" height="1.200" fill="#e0e0e0"/><circle cx="505.25" cy="228.900" r="3.600" fill="rgb(48,56,54)"/><rect x="504.70" y="234" width="1.100" height="1.200" fill="#e0e0e0"/><circle cx="514.85" cy="219.800" r="3.500" fill="#414141"/><circle cx="514.85" cy="228.900" r="3.600" fill="#484848"/><rect x="514.25" y="233.6" width="1.2" height="3.2" fill="#f0f0f0"/><circle cx="524.45" cy="228.900" r="3.400" fill="rgb(103,231,231)"/><circle cx="524.45" cy="228.900" r="3.200" fill="none" stroke="rgba(0,0,0,0.12)" stroke-width="0.8"/><rect x="523.90" y="234" width="1.100" height="1.200" fill="#e0e0e0"/><circle cx="534.04" cy="228.900" r="3.400" fill="rgb(106,232,208)"/><circle cx="534.04" cy="228.900" r="3.200" fill="none" stroke="rgba(0,0,0,0.12)" stroke-width="0.8"/><rect x="533.49" y="234" width="1.100" height="1.200" fill="#e0e0e0"/><circle cx="543.64" cy="228.900" r="3.400" fill="rgb(109,233,184)"/><circle cx="543.64" cy="228.900" r="3.200" fill="none" stroke="rgba(0,0,0,0.12)" stroke-width="0.8"/><rect x="543.09" y="234" width="1.100" height="1.200" fill="#e0e0e0"/><circle cx="553.24" cy="228.900" r="3.400" fill="rgb(114,233,156)"/><circle cx="553.24" cy="228.900" r="3.200" fill="none" stroke="rgba(0,0,0,0.12)" stroke-width="0.8"/><rect x="552.69" y="234" width="1.100" height="1.200" fill="#e0e0e0"/><circle cx="562.83" cy="228.900" r="3.400" fill="rgb(118,233,128)"/><circle cx="562.83" cy="228.900" r="3.200" fill="none" stroke="rgba(0,0,0,0.12)" stroke-width="0.8"/><rect x="562.23" y="233.6" width="1.2" height="3.2" fill="#f0f0f0"/><circle cx="572.43" cy="228.900" r="3.400" fill="rgb(123,234,109)"/><circle cx="572.43" cy="228.900" r="3.200" fill="none" stroke="rgba(0,0,0,0.12)" stroke-width="0.8"/><rect x="571.88" y="234" width="1.100" height="1.200" fill="#e0e0e0"/><circle cx="582.03" cy="228.900" r="3.400" fill="rgb(128,235,90)"/><circle cx="582.03" cy="228.900" r="3.200" fill="none" stroke="rgba(0,0,0,0.12)" stroke-width="0.8"/><rect x="581.48" y="234" width="1.100" height="1.200" fill="#e0e0e0"/><circle cx="591.63" cy="228.900" r="3.400" fill="rgb(130,235,85)"/><circle cx="591.63" cy="228.900" r="3.200" fill="none" stroke="rgba(0,0,0,0.12)" stroke-width="0.8"/><rect x="591.08" y="234" width="1.100" height="1.200" fill="#e0e0e0"/><circle cx="601.22" cy="228.900" r="3.400" fill="rgb(133,235,80)"/><circle cx="601.22" cy="228.900" r="3.200" fill="none" stroke="rgba(0,0,0,0.12)" stroke-width="0.8"/><rect x="600.67" y="234" width="1.100" height="1.200" fill="#e0e0e0"/><circle cx="610.82" cy="228.900" r="3.400" fill="rgb(135,235,75)"/><circle cx="610.82" cy="228.900" r="3.200" fill="none" stroke="rgba(0,0,0,0.12)" stroke-width="0.8"/><rect x="610.22" y="233.6" width="1.2" height="3.2" fill="#f0f0f0"/><circle cx="620.42" cy="228.900" r="3.400" fill="rgb(142,236,75)"/><circle cx="620.42" cy="228.900" r="3.200" fill="none" stroke="rgba(0,0,0,0.12)" stroke-width="0.8"/><rect x="619.87" y="234" width="1.100" height="1.200" fill="#e0e0e0"/><circle cx="630.01" cy="228.900" r="3.400" fill="rgb(149,236,75)"/><circle cx="630.01" cy="228.900" r="3.200" fill="none" stroke="rgba(0,0,0,0.12)" stroke-width="0.8"/><rect x="629.46" y="234" width="1.100" height="1.200" fill="#e0e0e0"/><circle cx="639.61" cy="228.900" r="3.400" fill="rgb(156,237,75)"/><circle cx="639.61" cy="228.900" r="3.200" fill="none" stroke="rgba(0,0,0,0.12)" stroke-width="0.8"/><rect x="639.06" y="234" width="1.100" height="1.200" fill="#e0e0e0"/><circle cx="649.21" cy="228.900" r="3.400" fill="rgb(165,237,75)"/><circle cx="649.21" cy="228.900" r="3.200" fill="none" stroke="rgba(0,0,0,0.12)" stroke-width="0.8"/><rect x="648.66" y="234" width="1.100" height="1.200" fill="#e0e0e0"/><circle cx="658.80" cy="228.900" r="3.400" fill="rgb(175,237,75)"/><circle cx="658.80" cy="228.900" r="3.200" fill="none" stroke="rgba(0,0,0,0.12)" stroke-width="0.8"/><rect x="658.20" y="233.6" width="1.2" height="3.2" fill="#f0f0f0"/><circle cx="668.40" cy="228.900" r="3.400" fill="rgb(189,237,75)"/><circle cx="668.40" cy="228.900" r="3.200" fill="none" stroke="rgba(0,0,0,0.12)" stroke-width="0.8"/><rect x="667.85" y="234" width="1.100" height="1.200" fill="#e0e0e0"/><circle cx="678.00" cy="228.900" r="3.400" fill="rgb(203,237,75)"/><circle cx="678.00" cy="228.900" r="3.200" fill="none" stroke="rgba(0,0,0,0.12)" stroke-width="0.8"/><rect x="677.45" y="234" width="1.100" height="1.200" fill="#e0e0e0"/><circle cx="687.60" cy="228.900" r="3.400" fill="rgb(213,236,75)"/><circle cx="687.60" cy="228.900" r="3.200" fill="none" stroke="rgba(0,0,0,0.12)" stroke-width="0.8"/><rect x="687.05" y="234" width="1.100" height="1.200" fill="#e0e0e0"/><circle cx="697.19" cy="228.900" r="3.400" fill="rgb(223,234,75)"/><circle cx="697.19" cy="228.900" r="3.200" fill="none" stroke="rgba(0,0,0,0.12)" stroke-width="0.8"/><rect x="696.64" y="234" width="1.100" height="1.200" fill="#e0e0e0"/><circle cx="706.79" cy="228.900" r="3.400" fill="rgb(233,233,75)"/><circle cx="706.79" cy="228.900" r="3.200" fill="none" stroke="rgba(0,0,0,0.12)" stroke-width="0.8"/><rect x="706.19" y="233.6" width="1.2" height="3.2" fill="#f0f0f0"/><circle cx="716.39" cy="228.900" r="3.400" fill="rgb(239,227,73)"/><circle cx="716.39" cy="228.900" r="3.200" fill="none" stroke="rgba(0,0,0,0.12)" stroke-width="0.8"/><rect x="715.84" y="234" width="1.100" height="1.200" fill="#e0e0e0"/><circle cx="725.98" cy="228.900" r="3.400" fill="rgb(244,222,71)"/><circle cx="725.98" cy="228.900" r="3.200" fill="none" stroke="rgba(0,0,0,0.12)" stroke-width="0.8"/><rect x="725.43" y="234" width="1.100" height="1.200" fill="#e0e0e0"/><circle cx="735.58" cy="228.900" r="3.400" fill="rgb(245,208,70)"/><circle cx="735.58" cy="228.900" r="3.200" fill="none" stroke="rgba(0,0,0,0.12)" stroke-width="0.8"/><rect x="735.03" y="234" width="1.100" height="1.200" fill="#e0e0e0"/><circle cx="745.18" cy="228.900" r="3.400" fill="rgb(246,194,68)"/><circle cx="745.18" cy="228.900" r="3.200" fill="none" stroke="rgba(0,0,0,0.12)" stroke-width="0.8"/><rect x="744.63" y="234" width="1.100" height="1.200" fill="#e0e0e0"/><circle cx="754.77" cy="228.900" r="3.400" fill="rgb(246,180,64)"/><circle cx="754.77" cy="228.900" r="3.200" fill="none" stroke="rgba(0,0,0,0.12)" stroke-width="0.8"/><rect x="754.17" y="233.6" width="1.2" height="3.2" fill="#f0f0f0"/><circle cx="764.37" cy="228.900" r="3.400" fill="rgb(245,173,63)"/><circle cx="764.37" cy="228.900" r="3.200" fill="none" stroke="rgba(0,0,0,0.12)" stroke-width="0.8"/><rect x="763.82" y="234" width="1.100" height="1.200" fill="#e0e0e0"/><circle cx="773.97" cy="228.900" r="3.400" fill="rgb(244,165,62)"/><circle cx="773.97" cy="228.900" r="3.200" fill="none" stroke="rgba(0,0,0,0.12)" stroke-width="0.8"/><rect x="773.42" y="234" width="1.100" height="1.200" fill="#e0e0e0"/><circle cx="783.57" cy="228.900" r="3.400" fill="rgb(244,158,61)"/><circle cx="783.57" cy="228.900" r="3.200" fill="none" stroke="rgba(0,0,0,0.12)" stroke-width="0.8"/><rect x="783.02" y="234" width="1.100" height="1.200" fill="#e0e0e0"/><circle cx="793.16" cy="228.900" r="3.400" fill="rgb(243,150,61)"/><circle cx="793.16" cy="228.900" r="3.200" fill="none" stroke="rgba(0,0,0,0.12)" stroke-width="0.8"/><rect x="792.61" y="234" width="1.100" height="1.200" fill="#e0e0e0"/><circle cx="802.76" cy="228.900" r="3.400" fill="rgb(242,143,60)"/><circle cx="802.76" cy="228.900" r="3.200" fill="none" stroke="rgba(0,0,0,0.12)" stroke-width="0.8"/><rect x="802.16" y="233.6" width="1.2" height="3.2" fill="#f0f0f0"/><circle cx="812.36" cy="228.900" r="3.400" fill="rgb(242,135,59)"/><circle cx="812.36" cy="228.900" r="3.200" fill="none" stroke="rgba(0,0,0,0.12)" stroke-width="0.8"/><rect x="811.81" y="234" width="1.100" height="1.200" fill="#e0e0e0"/><circle cx="821.95" cy="228.900" r="3.400" fill="rgb(241,127,58)"/><circle cx="821.95" cy="228.900" r="3.200" fill="none" stroke="rgba(0,0,0,0.12)" stroke-width="0.8"/><rect x="821.40" y="234" width="1.100" height="1.200" fill="#e0e0e0"/><circle cx="831.55" cy="228.900" r="3.400" fill="rgb(241,118,56)"/><circle cx="831.55" cy="228.900" r="3.200" fill="none" stroke="rgba(0,0,0,0.12)" stroke-width="0.8"/><rect x="831.00" y="234" width="1.100" height="1.200" fill="#e0e0e0"/><circle cx="841.15" cy="228.900" r="3.400" fill="rgb(240,109,54)"/><circle cx="841.15" cy="228.900" r="3.200" fill="none" stroke="rgba(0,0,0,0.12)" stroke-width="0.8"/><rect x="840.60" y="234" width="1.100" height="1.200" fill="#e0e0e0"/><circle cx="850.75" cy="228.900" r="3.400" fill="rgb(239,100,53)"/><circle cx="850.75" cy="228.900" r="3.200" fill="none" stroke="rgba(0,0,0,0.12)" stroke-width="0.8"/><rect x="850.14" y="233.6" width="1.2" height="3.2" fill="#f0f0f0"/><circle cx="860.34" cy="228.900" r="3.400" fill="rgb(238,90,53)"/><circle cx="860.34" cy="228.900" r="3.200" fill="none" stroke="rgba(0,0,0,0.12)" stroke-width="0.8"/><rect x="859.79" y="234" width="1.100" height="1.200" fill="#e0e0e0"/><circle cx="869.94" cy="228.900" r="3.400" fill="rgb(237,81,53)"/><circle cx="869.94" cy="228.900" r="3.200" fill="none" stroke="rgba(0,0,0,0.12)" stroke-width="0.8"/><rect x="869.39" y="234" width="1.100" height="1.200" fill="#e0e0e0"/><circle cx="879.54" cy="228.900" r="3.400" fill="rgb(235,74,53)"/><circle cx="879.54" cy="228.900" r="3.200" fill="none" stroke="rgba(0,0,0,0.12)" stroke-width="0.8"/><rect x="878.99" y="234" width="1.100" height="1.200" fill="#e0e0e0"/><circle cx="889.13" cy="228.900" r="3.400" fill="rgb(233,68,53)"/><circle cx="889.13" cy="228.900" r="3.200" fill="none" stroke="rgba(0,0,0,0.12)" stroke-width="0.8"/><rect x="888.58" y="234" width="1.100" height="1.200" fill="#e0e0e0"/><circle cx="898.73" cy="228.900" r="3.800" fill="rgb(74,16,12)"/><rect x="898.13" y="233.6" width="1.2" height="3.2" fill="#f0f0f0"/><circle cx="908.33" cy="228.900" r="3.800" fill="rgb(74,16,12)"/><rect x="907.78" y="234" width="1.100" height="1.200" fill="#e0e0e0"/><circle cx="917.92" cy="228.900" r="3.800" fill="rgb(74,16,12)"/><rect x="917.37" y="234" width="1.100" height="1.200" fill="#e0e0e0"/><circle cx="927.52" cy="228.900" r="3.800" fill="rgb(74,16,12)"/><rect x="926.97" y="234" width="1.100" height="1.200" fill="#e0e0e0"/><circle cx="937.12" cy="228.900" r="3.800" fill="rgb(74,15,12)"/><rect x="936.57" y="234" width="1.100" height="1.200" fill="#e0e0e0"/><circle cx="946.71" cy="228.900" r="3.800" fill="rgb(74,15,12)"/><rect x="946.11" y="233.6" width="1.2" height="3.2" fill="#f0f0f0"/><circle cx="956.31" cy="228.900" r="3.800" fill="rgb(74,15,12)"/><rect x="955.76" y="234" width="1.100" height="1.200" fill="#e0e0e0"/><circle cx="965.91" cy="228.900" r="3.800" fill="rgb(74,15,12)"/><rect x="965.36" y="234" width="1.100" height="1.200" fill="#e0e0e0"/><circle cx="975.51" cy="228.900" r="3.800" fill="rgb(74,15,12)"/><rect x="974.96" y="234" width="1.100" height="1.200" fill="#e0e0e0"/><circle cx="985.10" cy="228.900" r="3.800" fill="rgb(74,15,12)"/><rect x="984.55" y="234" width="1.100" height="1.200" fill="#e0e0e0"/><circle cx="994.70" cy="228.900" r="3.800" fill="rgb(74,15,12)"/><rect x="994.10" y="233.6" width="1.2" height="3.2" fill="#f0f0f0"/></svg>
<div class="t w8" style="left:15.0px;top:237.2px;width:40px;text-align:center;-webkit-text-stroke:0.2px #fff;font-size:8.7px;transform:scaleX(0.94)">-50</div>
<div class="t w8" style="left:62.985px;top:237.2px;width:40px;text-align:center;-webkit-text-stroke:0.2px #fff;font-size:8.7px;transform:scaleX(0.94)">-45</div>
<div class="t w8" style="left:110.97px;top:237.2px;width:40px;text-align:center;-webkit-text-stroke:0.2px #fff;font-size:8.7px;transform:scaleX(0.94)">-40</div>
<div class="t w8" style="left:158.95499999999998px;top:237.2px;width:40px;text-align:center;-webkit-text-stroke:0.2px #fff;font-size:8.7px;transform:scaleX(0.94)">-35</div>
<div class="t w8" style="left:206.94px;top:237.2px;width:40px;text-align:center;-webkit-text-stroke:0.2px #fff;font-size:8.7px;transform:scaleX(0.94)">-30</div>
<div class="t w8" style="left:254.92499999999995px;top:237.2px;width:40px;text-align:center;-webkit-text-stroke:0.2px #fff;font-size:8.7px;transform:scaleX(0.94)">-25</div>
<div class="t w8" style="left:302.90999999999997px;top:237.2px;width:40px;text-align:center;-webkit-text-stroke:0.2px #fff;font-size:8.7px;transform:scaleX(0.94)">-20</div>
<div class="t w8" style="left:350.895px;top:237.2px;width:40px;text-align:center;-webkit-text-stroke:0.2px #fff;font-size:8.7px;transform:scaleX(0.94)">-15</div>
<div class="t w8" style="left:398.88px;top:237.2px;width:40px;text-align:center;-webkit-text-stroke:0.2px #fff;font-size:8.7px;transform:scaleX(0.94)">-10</div>
<div class="t w8" style="left:446.86499999999995px;top:237.2px;width:40px;text-align:center;-webkit-text-stroke:0.2px #fff;font-size:8.7px;transform:scaleX(0.94)">-5</div>
<div class="t w8" style="left:494.8499999999999px;top:237.2px;width:40px;text-align:center;-webkit-text-stroke:0.2px #fff;font-size:8.7px;transform:scaleX(0.94)">0</div>
<div class="t w8" style="left:542.8349999999999px;top:237.2px;width:40px;text-align:center;-webkit-text-stroke:0.2px #fff;font-size:8.7px;transform:scaleX(0.94)">+5</div>
<div class="t w8" style="left:590.8199999999999px;top:237.2px;width:40px;text-align:center;-webkit-text-stroke:0.2px #fff;font-size:8.7px;transform:scaleX(0.94)">+10</div>
<div class="t w8" style="left:638.805px;top:237.2px;width:40px;text-align:center;-webkit-text-stroke:0.2px #fff;font-size:8.7px;transform:scaleX(0.94)">+15</div>
<div class="t w8" style="left:686.79px;top:237.2px;width:40px;text-align:center;-webkit-text-stroke:0.2px #fff;font-size:8.7px;transform:scaleX(0.94)">+20</div>
<div class="t w8" style="left:734.775px;top:237.2px;width:40px;text-align:center;-webkit-text-stroke:0.2px #fff;font-size:8.7px;transform:scaleX(0.94)">25</div>
<div class="t w8" style="left:782.76px;top:237.2px;width:40px;text-align:center;-webkit-text-stroke:0.2px #fff;font-size:8.7px;transform:scaleX(0.94)">+30</div>
<div class="t w8" style="left:830.745px;top:237.2px;width:40px;text-align:center;-webkit-text-stroke:0.2px #fff;font-size:8.7px;transform:scaleX(0.94)">+35</div>
<div class="t w8" style="left:878.7299999999999px;top:237.2px;width:40px;text-align:center;-webkit-text-stroke:0.2px #fff;font-size:8.7px;transform:scaleX(0.94)">+40</div>
<div class="t w8" style="left:926.7149999999999px;top:237.2px;width:40px;text-align:center;-webkit-text-stroke:0.2px #fff;font-size:8.7px;transform:scaleX(0.94)">+45</div>
<div class="t w8" style="left:974.6999999999999px;top:237.2px;width:40px;text-align:center;-webkit-text-stroke:0.2px #fff;font-size:8.7px;transform:scaleX(0.94)">+50</div>
<div class="t w9" style="left:464.5px;top:247px;width:100px;text-align:center;font-size:9.6px;-webkit-text-stroke:0.25px #fff">A2 @ A 440.</div>
<div class="btn" style="left:9px;top:269.30px;width:22.4px;height:16.7px;font-size:8px;line-height:15.2px;border-radius:3px">F</div>
<div class="abs" style="left:34.2px;top:269.30px;width:319.6px;height:16.7px;background:#333;border:1px solid #151515"></div>
<div class="abs" style="left:38px;top:269.20px;width:124.7px;height:17.1px;background:#6a138a"></div>
<div class="abs" style="left:157.2px;top:269.30px;width:0.8px;height:16.7px;background:rgba(0,0,0,0.35)"></div>
<div class="nb s" style="left:356.7px;top:269.3px;width:38.3px;height:16.7px;"><i></i><span>16</span></div>
<div class="nb s" style="left:398px;top:269.3px;width:52.5px;height:16.7px;"><i></i><span>5.69395</span></div>
<div class="btn" style="left:9px;top:288.70px;width:22.4px;height:15px;font-size:8px;line-height:13.5px;border-radius:3px">E</div>
<div class="abs" style="left:34.2px;top:288.70px;width:319.6px;height:15px;background:#333;border:1px solid #151515"></div>
<div class="abs" style="left:38px;top:288.60px;width:117.2px;height:15.4px;background:#6a14e0"></div>
<div class="abs" style="left:149.7px;top:288.70px;width:0.8px;height:15px;background:rgba(0,0,0,0.35)"></div>
<div class="nb s" style="left:356.7px;top:288.7px;width:38.3px;height:15px;"><i></i><span>15</span></div>
<div class="nb s" style="left:398px;top:288.7px;width:52.5px;height:15px;"><i></i><span>5.338078</span></div>
<div class="btn" style="left:9px;top:307.10px;width:22.4px;height:15px;font-size:8px;line-height:13.5px;border-radius:3px">D#</div>
<div class="abs" style="left:34.2px;top:307.10px;width:319.6px;height:15px;background:#333;border:1px solid #151515"></div>
<div class="abs" style="left:38px;top:307.00px;width:154.7px;height:15.4px;background:#0c00f6"></div>
<div class="abs" style="left:187.2px;top:307.10px;width:0.8px;height:15px;background:rgba(0,0,0,0.35)"></div>
<div class="nb s" style="left:356.7px;top:307.1px;width:38.3px;height:15px;"><i></i><span>20</span></div>
<div class="nb s" style="left:398px;top:307.1px;width:52.5px;height:15px;"><i></i><span>7.117438</span></div>
<div class="btn" style="left:9px;top:325.50px;width:22.4px;height:15px;font-size:8px;line-height:13.5px;border-radius:3px">D</div>
<div class="abs" style="left:34.2px;top:325.50px;width:319.6px;height:15px;background:#333;border:1px solid #151515"></div>
<div class="abs" style="left:38px;top:325.40px;width:79.7px;height:15.4px;background:#3f90f6"></div>
<div class="abs" style="left:112.2px;top:325.50px;width:0.8px;height:15px;background:rgba(0,0,0,0.35)"></div>
<div class="nb s" style="left:356.7px;top:325.5px;width:38.3px;height:15px;"><i></i><span>10</span></div>
<div class="nb s" style="left:398px;top:325.5px;width:52.5px;height:15px;"><i></i><span>3.558719</span></div>
<div class="btn" style="left:9px;top:343.90px;width:22.4px;height:15px;font-size:8px;line-height:13.5px;border-radius:3px">C#</div>
<div class="abs" style="left:34.2px;top:343.90px;width:319.6px;height:15px;background:#333;border:1px solid #151515"></div>
<div class="abs" style="left:38px;top:343.80px;width:177.2px;height:15.4px;background:#74fbe9"></div>
<div class="abs" style="left:209.7px;top:343.90px;width:0.8px;height:15px;background:rgba(0,0,0,0.35)"></div>
<div class="nb s" style="left:356.7px;top:343.9px;width:38.3px;height:15px;"><i></i><span>23</span></div>
<div class="nb s" style="left:398px;top:343.9px;width:52.5px;height:15px;"><i></i><span>8.185053</span></div>
<div class="btn" style="left:9px;top:362.30px;width:22.4px;height:15px;font-size:8px;line-height:13.5px;border-radius:3px">C</div>
<div class="abs" style="left:34.2px;top:362.30px;width:319.6px;height:15px;background:#333;border:1px solid #151515"></div>
<div class="abs" style="left:38px;top:362.20px;width:312.2px;height:15.4px;background:#7cfa4a"></div>
<div class="abs" style="left:344.7px;top:362.30px;width:0.8px;height:15px;background:rgba(0,0,0,0.35)"></div>
<div class="nb s" style="left:356.7px;top:362.3px;width:38.3px;height:15px;"><i></i><span>41</span></div>
<div class="nb s" style="left:398px;top:362.3px;width:52.5px;height:15px;"><i></i><span>14.590747</span></div>
<div class="btn" style="left:9px;top:380.70px;width:22.4px;height:15px;font-size:8px;line-height:13.5px;border-radius:3px">B</div>
<div class="abs" style="left:34.2px;top:380.70px;width:319.6px;height:15px;background:#333;border:1px solid #151515"></div>
<div class="abs" style="left:38px;top:380.60px;width:244.7px;height:15.4px;background:#b9fb4b"></div>
<div class="abs" style="left:277.2px;top:380.70px;width:0.8px;height:15px;background:rgba(0,0,0,0.35)"></div>
<div class="nb s" style="left:356.7px;top:380.7px;width:38.3px;height:15px;"><i></i><span>32</span></div>
<div class="nb s" style="left:398px;top:380.7px;width:52.5px;height:15px;"><i></i><span>11.3879</span></div>
<div class="btn" style="left:9px;top:399.10px;width:22.4px;height:15px;font-size:8px;line-height:13.5px;border-radius:3px">A#</div>
<div class="abs" style="left:34.2px;top:399.10px;width:319.6px;height:15px;background:#333;border:1px solid #151515"></div>
<div class="abs" style="left:38px;top:399.00px;width:139.7px;height:15.4px;background:#fdf04f"></div>
<div class="abs" style="left:172.2px;top:399.10px;width:0.8px;height:15px;background:rgba(0,0,0,0.35)"></div>
<div class="nb s" style="left:356.7px;top:399.1px;width:38.3px;height:15px;"><i></i><span>18</span></div>
<div class="nb s" style="left:398px;top:399.1px;width:52.5px;height:15px;"><i></i><span>6.405694</span></div>
<div class="btn" style="left:9px;top:417.50px;width:22.4px;height:15px;font-size:8px;line-height:13.5px;border-radius:3px">A</div>
<div class="abs" style="left:34.2px;top:417.50px;width:319.6px;height:15px;background:#333;border:1px solid #151515"></div>
<div class="abs" style="left:38px;top:417.40px;width:267.2px;height:15.4px;background:#ee7f2f"></div>
<div class="abs" style="left:299.7px;top:417.50px;width:0.8px;height:15px;background:rgba(0,0,0,0.35)"></div>
<div class="nb s" style="left:356.7px;top:417.5px;width:38.3px;height:15px;"><i></i><span>35</span></div>
<div class="nb s" style="left:398px;top:417.5px;width:52.5px;height:15px;"><i></i><span>12.455516</span></div>
<div class="btn" style="left:9px;top:435.90px;width:22.4px;height:15px;font-size:8px;line-height:13.5px;border-radius:3px">G#</div>
<div class="abs" style="left:34.2px;top:435.90px;width:319.6px;height:15px;background:#333;border:1px solid #151515"></div>
<div class="abs" style="left:38px;top:435.80px;width:147.2px;height:15.4px;background:#ea2f24"></div>
<div class="abs" style="left:179.7px;top:435.90px;width:0.8px;height:15px;background:rgba(0,0,0,0.35)"></div>
<div class="nb s" style="left:356.7px;top:435.9px;width:38.3px;height:15px;"><i></i><span>19</span></div>
<div class="nb s" style="left:398px;top:435.9px;width:52.5px;height:15px;"><i></i><span>6.761566</span></div>
<div class="btn" style="left:9px;top:454.30px;width:22.4px;height:15px;font-size:8px;line-height:13.5px;border-radius:3px">G</div>
<div class="abs" style="left:34.2px;top:454.30px;width:319.6px;height:15px;background:#333;border:1px solid #151515"></div>
<div class="abs" style="left:38px;top:454.20px;width:124.7px;height:15.4px;background:#ea2f24"></div>
<div class="abs" style="left:157.2px;top:454.30px;width:0.8px;height:15px;background:rgba(0,0,0,0.35)"></div>
<div class="nb s" style="left:356.7px;top:454.3px;width:38.3px;height:15px;"><i></i><span>16</span></div>
<div class="nb s" style="left:398px;top:454.3px;width:52.5px;height:15px;"><i></i><span>5.69395</span></div>
<div class="btn" style="left:9px;top:472.70px;width:22.4px;height:15px;font-size:8px;line-height:13.5px;border-radius:3px">F#</div>
<div class="abs" style="left:34.2px;top:472.70px;width:319.6px;height:15px;background:#333;border:1px solid #151515"></div>
<div class="abs" style="left:38px;top:472.60px;width:274.7px;height:15.4px;background:#a31c17"></div>
<div class="abs" style="left:307.2px;top:472.70px;width:0.8px;height:15px;background:rgba(0,0,0,0.35)"></div>
<div class="nb s" style="left:356.7px;top:472.7px;width:38.3px;height:15px;"><i></i><span>36</span></div>
<div class="nb s" style="left:398px;top:472.7px;width:52.5px;height:15px;"><i></i><span>12.811388</span></div>
<svg class="abs" style="left:455px;top:268px" width="222" height="224" viewBox="455 268 222 224"><circle cx="566.0" cy="379.4" r="99.7" fill="#333"/><path d="M549.45 280.48A100.3 100.3 0 0 1 582.55 280.48" stroke="#0c0c0c" stroke-width="1.3" fill="none"/><line x1="566.0" y1="379.4" x2="565.21" y2="278.20" stroke="#b0b0c2" stroke-width="1.6" stroke-opacity="0.8"/><line x1="566.0" y1="379.4" x2="591.42" y2="281.45" stroke="#b0b0c2" stroke-width="1.6" stroke-opacity="0.8"/><line x1="566.0" y1="379.4" x2="615.91" y2="291.36" stroke="#b0b0c2" stroke-width="1.6" stroke-opacity="0.8"/><line x1="566.0" y1="379.4" x2="636.99" y2="307.28" stroke="#b0b0c2" stroke-width="1.6" stroke-opacity="0.8"/><line x1="566.0" y1="379.4" x2="653.24" y2="328.11" stroke="#b0b0c2" stroke-width="1.6" stroke-opacity="0.8"/><line x1="566.0" y1="379.4" x2="663.54" y2="352.44" stroke="#b0b0c2" stroke-width="1.6" stroke-opacity="0.8"/><line x1="566.0" y1="379.4" x2="667.20" y2="378.61" stroke="#b0b0c2" stroke-width="1.6" stroke-opacity="0.8"/><line x1="566.0" y1="379.4" x2="663.95" y2="404.82" stroke="#b0b0c2" stroke-width="1.6" stroke-opacity="0.8"/><line x1="566.0" y1="379.4" x2="654.04" y2="429.31" stroke="#b0b0c2" stroke-width="1.6" stroke-opacity="0.8"/><line x1="566.0" y1="379.4" x2="638.12" y2="450.39" stroke="#b0b0c2" stroke-width="1.6" stroke-opacity="0.8"/><line x1="566.0" y1="379.4" x2="617.29" y2="466.64" stroke="#b0b0c2" stroke-width="1.6" stroke-opacity="0.8"/><line x1="566.0" y1="379.4" x2="592.96" y2="476.94" stroke="#b0b0c2" stroke-width="1.6" stroke-opacity="0.8"/><line x1="566.0" y1="379.4" x2="566.79" y2="480.60" stroke="#b0b0c2" stroke-width="1.6" stroke-opacity="0.8"/><line x1="566.0" y1="379.4" x2="540.58" y2="477.35" stroke="#b0b0c2" stroke-width="1.6" stroke-opacity="0.8"/><line x1="566.0" y1="379.4" x2="516.09" y2="467.44" stroke="#b0b0c2" stroke-width="1.6" stroke-opacity="0.8"/><line x1="566.0" y1="379.4" x2="495.01" y2="451.52" stroke="#b0b0c2" stroke-width="1.6" stroke-opacity="0.8"/><line x1="566.0" y1="379.4" x2="478.76" y2="430.69" stroke="#b0b0c2" stroke-width="1.6" stroke-opacity="0.8"/><line x1="566.0" y1="379.4" x2="468.46" y2="406.36" stroke="#b0b0c2" stroke-width="1.6" stroke-opacity="0.8"/><line x1="566.0" y1="379.4" x2="464.80" y2="380.19" stroke="#b0b0c2" stroke-width="1.6" stroke-opacity="0.8"/><line x1="566.0" y1="379.4" x2="468.05" y2="353.98" stroke="#b0b0c2" stroke-width="1.6" stroke-opacity="0.8"/><line x1="566.0" y1="379.4" x2="477.96" y2="329.49" stroke="#b0b0c2" stroke-width="1.6" stroke-opacity="0.8"/><line x1="566.0" y1="379.4" x2="493.88" y2="308.41" stroke="#b0b0c2" stroke-width="1.6" stroke-opacity="0.8"/><line x1="566.0" y1="379.4" x2="514.71" y2="292.16" stroke="#b0b0c2" stroke-width="1.6" stroke-opacity="0.8"/><line x1="566.0" y1="379.4" x2="539.04" y2="281.86" stroke="#b0b0c2" stroke-width="1.6" stroke-opacity="0.8"/><line x1="566.3" y1="380.0" x2="553.5" y2="364.8" stroke="rgb(154,250,74)" stroke-width="1.3"/><line x1="566.3" y1="380.0" x2="554.2" y2="365.1" stroke="rgb(148,250,74)" stroke-width="1.3"/><line x1="566.3" y1="380.0" x2="551.7" y2="361.5" stroke="rgb(141,250,74)" stroke-width="1.3"/><line x1="566.3" y1="380.0" x2="554.3" y2="364.3" stroke="rgb(134,250,74)" stroke-width="1.3"/><line x1="566.3" y1="380.0" x2="552.0" y2="360.7" stroke="rgb(127,250,74)" stroke-width="1.3"/><line x1="566.3" y1="380.0" x2="553.0" y2="361.3" stroke="rgb(124,250,74)" stroke-width="1.3"/><line x1="566.3" y1="380.0" x2="554.7" y2="363.2" stroke="rgb(124,250,74)" stroke-width="1.3"/><line x1="566.3" y1="380.0" x2="552.9" y2="360.0" stroke="rgb(124,250,74)" stroke-width="1.3"/><line x1="566.3" y1="380.0" x2="555.3" y2="363.0" stroke="rgb(124,250,74)" stroke-width="1.3"/><line x1="566.3" y1="380.0" x2="553.9" y2="360.1" stroke="rgb(124,250,74)" stroke-width="1.3"/><line x1="566.3" y1="380.0" x2="555.7" y2="362.4" stroke="rgb(124,250,74)" stroke-width="1.3"/><line x1="566.3" y1="380.0" x2="555.9" y2="362.1" stroke="rgb(124,250,74)" stroke-width="1.3"/><line x1="566.3" y1="380.0" x2="554.9" y2="359.6" stroke="rgb(124,250,74)" stroke-width="1.3"/><line x1="566.3" y1="380.0" x2="553.7" y2="356.5" stroke="rgb(124,250,74)" stroke-width="1.3"/><line x1="566.3" y1="380.0" x2="556.6" y2="361.4" stroke="rgb(124,250,74)" stroke-width="1.3"/><line x1="566.3" y1="380.0" x2="556.6" y2="360.5" stroke="rgb(124,250,74)" stroke-width="1.3"/><line x1="566.3" y1="380.0" x2="555.5" y2="357.4" stroke="rgb(124,250,74)" stroke-width="1.3"/><line x1="566.3" y1="380.0" x2="554.7" y2="354.9" stroke="rgb(124,250,74)" stroke-width="1.3"/><line x1="566.3" y1="380.0" x2="556.4" y2="357.4" stroke="rgb(124,250,74)" stroke-width="1.3"/><line x1="566.3" y1="380.0" x2="557.3" y2="358.6" stroke="rgb(124,250,74)" stroke-width="1.3"/><line x1="566.3" y1="380.0" x2="555.9" y2="354.1" stroke="rgb(124,250,74)" stroke-width="1.3"/><line x1="566.3" y1="380.0" x2="559.0" y2="361.0" stroke="rgb(124,250,74)" stroke-width="1.3"/><line x1="566.3" y1="380.0" x2="557.0" y2="354.7" stroke="rgb(124,250,74)" stroke-width="1.3"/><line x1="566.3" y1="380.0" x2="558.9" y2="358.9" stroke="rgb(124,250,74)" stroke-width="1.3"/><line x1="566.3" y1="380.0" x2="559.6" y2="359.9" stroke="rgb(124,250,74)" stroke-width="1.3"/><line x1="566.3" y1="380.0" x2="560.0" y2="360.0" stroke="rgb(124,250,74)" stroke-width="1.3"/><line x1="566.3" y1="380.0" x2="559.9" y2="358.5" stroke="rgb(124,250,74)" stroke-width="1.3"/><line x1="566.3" y1="380.0" x2="559.1" y2="354.4" stroke="rgb(124,250,74)" stroke-width="1.3"/><line x1="566.3" y1="380.0" x2="560.8" y2="359.3" stroke="rgb(124,250,74)" stroke-width="1.3"/><line x1="566.3" y1="380.0" x2="560.4" y2="356.0" stroke="rgb(124,250,74)" stroke-width="1.3"/><line x1="566.3" y1="380.0" x2="560.6" y2="355.5" stroke="rgb(124,250,74)" stroke-width="1.3"/><line x1="566.3" y1="380.0" x2="561.5" y2="357.5" stroke="rgb(124,250,74)" stroke-width="1.3"/><line x1="566.3" y1="380.0" x2="561.6" y2="356.0" stroke="rgb(124,250,74)" stroke-width="1.3"/><line x1="566.3" y1="380.0" x2="562.6" y2="359.8" stroke="rgb(124,250,74)" stroke-width="1.3"/><line x1="566.3" y1="380.0" x2="563.0" y2="359.8" stroke="rgb(124,250,74)" stroke-width="1.3"/><line x1="566.3" y1="380.0" x2="563.1" y2="358.6" stroke="rgb(124,250,74)" stroke-width="1.3"/><line x1="566.3" y1="380.0" x2="562.9" y2="354.7" stroke="rgb(124,250,74)" stroke-width="1.3"/><line x1="566.3" y1="380.0" x2="563.6" y2="356.7" stroke="rgb(124,250,74)" stroke-width="1.3"/><line x1="566.3" y1="380.0" x2="564.0" y2="357.6" stroke="rgb(124,250,74)" stroke-width="1.3"/><line x1="566.3" y1="380.0" x2="564.2" y2="355.4" stroke="rgb(124,250,74)" stroke-width="1.3"/><line x1="566.3" y1="380.0" x2="564.7" y2="356.4" stroke="rgb(124,250,74)" stroke-width="1.3"/><line x1="566.3" y1="380.0" x2="565.1" y2="357.6" stroke="rgb(124,250,74)" stroke-width="1.3"/><line x1="566.3" y1="380.0" x2="565.3" y2="353.6" stroke="rgb(124,250,74)" stroke-width="1.3"/><line x1="566.3" y1="380.0" x2="565.7" y2="354.4" stroke="rgb(124,250,74)" stroke-width="1.3"/><line x1="566.3" y1="380.0" x2="566.1" y2="358.0" stroke="rgb(124,250,74)" stroke-width="1.3"/><line x1="566.3" y1="380.0" x2="566.5" y2="355.4" stroke="rgb(124,250,74)" stroke-width="1.3"/><line x1="566.3" y1="380.0" x2="566.9" y2="355.8" stroke="rgb(124,250,74)" stroke-width="1.3"/><line x1="566.3" y1="380.0" x2="567.4" y2="353.0" stroke="rgb(124,250,74)" stroke-width="1.3"/><line x1="566.3" y1="380.0" x2="567.7" y2="354.2" stroke="rgb(124,250,74)" stroke-width="1.3"/><line x1="566.3" y1="380.0" x2="567.9" y2="357.7" stroke="rgb(124,250,74)" stroke-width="1.3"/><line x1="566.3" y1="380.0" x2="568.7" y2="352.2" stroke="rgb(124,250,74)" stroke-width="1.3"/><line x1="566.3" y1="380.0" x2="568.5" y2="359.2" stroke="rgb(124,250,74)" stroke-width="1.3"/><line x1="566.3" y1="380.0" x2="569.1" y2="356.8" stroke="rgb(124,250,74)" stroke-width="1.3"/><line x1="566.3" y1="380.0" x2="569.8" y2="354.1" stroke="rgb(124,250,74)" stroke-width="1.3"/><line x1="566.3" y1="380.0" x2="569.5" y2="359.0" stroke="rgb(124,250,74)" stroke-width="1.3"/><line x1="566.3" y1="380.0" x2="570.3" y2="356.4" stroke="rgb(124,250,74)" stroke-width="1.3"/><line x1="566.3" y1="380.0" x2="570.0" y2="360.0" stroke="rgb(124,250,74)" stroke-width="1.3"/><line x1="566.3" y1="380.0" x2="571.3" y2="355.1" stroke="rgb(124,250,74)" stroke-width="1.3"/><line x1="566.3" y1="380.0" x2="571.8" y2="354.4" stroke="rgb(124,250,74)" stroke-width="1.3"/><line x1="566.3" y1="380.0" x2="571.9" y2="356.0" stroke="rgb(124,250,74)" stroke-width="1.3"/><line x1="566.3" y1="380.0" x2="572.8" y2="353.7" stroke="rgb(124,250,74)" stroke-width="1.3"/><line x1="566.3" y1="380.0" x2="572.1" y2="358.2" stroke="rgb(124,250,74)" stroke-width="1.3"/><line x1="566.3" y1="380.0" x2="573.3" y2="355.4" stroke="rgb(124,250,74)" stroke-width="1.3"/><line x1="566.3" y1="380.0" x2="573.4" y2="356.3" stroke="rgb(124,250,74)" stroke-width="1.3"/><line x1="566.3" y1="380.0" x2="577.1" y2="345.8" stroke="rgb(98,220,102)" stroke-width="1.3"/><line x1="566.3" y1="380.0" x2="577.3" y2="347.1" stroke="rgb(98,220,102)" stroke-width="1.3"/><line x1="566.3" y1="380.0" x2="573.1" y2="360.7" stroke="rgb(124,250,74)" stroke-width="1.3"/><line x1="566.3" y1="380.0" x2="575.1" y2="356.3" stroke="rgb(124,250,74)" stroke-width="1.3"/><line x1="566.3" y1="380.0" x2="578.1" y2="349.5" stroke="rgb(98,220,103)" stroke-width="1.3"/><line x1="566.3" y1="380.0" x2="578.8" y2="349.2" stroke="rgb(97,220,110)" stroke-width="1.3"/><line x1="566.3" y1="380.0" x2="578.2" y2="352.0" stroke="rgb(97,220,118)" stroke-width="1.3"/><line x1="566.3" y1="380.0" x2="579.2" y2="351.0" stroke="rgb(96,220,125)" stroke-width="1.3"/><line x1="566.3" y1="380.0" x2="575.0" y2="361.2" stroke="rgb(120,250,150)" stroke-width="1.3"/><line x1="566.3" y1="380.0" x2="574.1" y2="363.8" stroke="rgb(119,251,167)" stroke-width="1.3"/><line x1="566.3" y1="380.0" x2="575.2" y2="362.2" stroke="rgb(118,251,185)" stroke-width="1.3"/><line x1="566.3" y1="380.0" x2="575.5" y2="362.2" stroke="rgb(118,251,203)" stroke-width="1.3"/><line x1="566.3" y1="380.0" x2="576.6" y2="361.0" stroke="rgb(117,251,221)" stroke-width="1.3"/><line x1="566.3" y1="380.0" x2="576.4" y2="361.9" stroke="rgb(116,251,233)" stroke-width="1.3"/><line x1="566.3" y1="380.0" x2="576.9" y2="361.9" stroke="rgb(116,251,233)" stroke-width="1.3"/><line x1="566.3" y1="380.0" x2="575.2" y2="365.2" stroke="rgb(116,251,233)" stroke-width="1.3"/><line x1="566.3" y1="380.0" x2="575.9" y2="364.6" stroke="rgb(116,251,233)" stroke-width="1.3"/><line x1="566.3" y1="380.0" x2="576.0" y2="365.1" stroke="rgb(116,251,233)" stroke-width="1.3"/><line x1="566.3" y1="380.0" x2="578.0" y2="362.5" stroke="rgb(116,251,233)" stroke-width="1.3"/><line x1="566.3" y1="380.0" x2="578.6" y2="362.3" stroke="rgb(116,251,233)" stroke-width="1.3"/><line x1="566.3" y1="380.0" x2="575.9" y2="366.6" stroke="rgb(116,251,233)" stroke-width="1.3"/><line x1="566.3" y1="380.0" x2="576.2" y2="366.6" stroke="rgb(116,251,233)" stroke-width="1.3"/><line x1="566.3" y1="380.0" x2="576.6" y2="366.5" stroke="rgb(116,251,233)" stroke-width="1.3"/><line x1="566.3" y1="380.0" x2="576.8" y2="366.7" stroke="rgb(116,251,233)" stroke-width="1.3"/><line x1="566.3" y1="380.0" x2="578.1" y2="365.6" stroke="rgb(116,251,233)" stroke-width="1.3"/><line x1="566.3" y1="380.0" x2="578.7" y2="365.3" stroke="rgb(116,251,233)" stroke-width="1.3"/><line x1="566.3" y1="380.0" x2="577.6" y2="367.0" stroke="rgb(116,251,233)" stroke-width="1.3"/><line x1="566.3" y1="380.0" x2="576.7" y2="368.4" stroke="rgb(116,251,233)" stroke-width="1.3"/><line x1="566.3" y1="380.0" x2="578.7" y2="366.7" stroke="rgb(116,251,233)" stroke-width="1.3"/><line x1="566.3" y1="380.0" x2="578.6" y2="367.1" stroke="rgb(116,251,233)" stroke-width="1.3"/><line x1="566.3" y1="380.0" x2="579.7" y2="366.4" stroke="rgb(116,251,233)" stroke-width="1.3"/><line x1="566.3" y1="380.0" x2="581.7" y2="364.9" stroke="rgb(116,251,233)" stroke-width="1.3"/><line x1="566.3" y1="380.0" x2="580.7" y2="366.3" stroke="rgb(113,246,234)" stroke-width="1.3"/><line x1="566.3" y1="380.0" x2="580.0" y2="367.4" stroke="rgb(107,234,235)" stroke-width="1.3"/><line x1="566.3" y1="380.0" x2="580.6" y2="367.2" stroke="rgb(101,222,237)" stroke-width="1.3"/><line x1="566.3" y1="380.0" x2="581.0" y2="367.3" stroke="rgb(95,210,238)" stroke-width="1.3"/><line x1="566.3" y1="380.0" x2="578.2" y2="370.0" stroke="rgb(90,198,240)" stroke-width="1.3"/><line x1="566.3" y1="380.0" x2="582.3" y2="367.0" stroke="rgb(84,185,241)" stroke-width="1.3"/><line x1="566.3" y1="380.0" x2="581.8" y2="367.8" stroke="rgb(78,173,242)" stroke-width="1.3"/><line x1="566.3" y1="380.0" x2="582.4" y2="367.8" stroke="rgb(72,161,244)" stroke-width="1.3"/><line x1="566.3" y1="380.0" x2="582.1" y2="368.3" stroke="rgb(66,149,245)" stroke-width="1.3"/><line x1="566.3" y1="380.0" x2="580.3" y2="370.0" stroke="rgb(63,144,246)" stroke-width="1.3"/><line x1="566.3" y1="380.0" x2="580.5" y2="370.2" stroke="rgb(63,144,246)" stroke-width="1.3"/><line x1="566.3" y1="380.0" x2="579.1" y2="371.4" stroke="rgb(63,144,246)" stroke-width="1.3"/><line x1="566.3" y1="380.0" x2="581.9" y2="369.9" stroke="rgb(63,144,246)" stroke-width="1.3"/><line x1="566.3" y1="380.0" x2="579.2" y2="372.0" stroke="rgb(63,144,246)" stroke-width="1.3"/><line x1="566.3" y1="380.0" x2="579.3" y2="372.2" stroke="rgb(63,144,246)" stroke-width="1.3"/><line x1="566.3" y1="380.0" x2="580.2" y2="371.9" stroke="rgb(63,144,246)" stroke-width="1.3"/><line x1="566.3" y1="380.0" x2="580.1" y2="372.3" stroke="rgb(63,144,246)" stroke-width="1.3"/><line x1="566.3" y1="380.0" x2="581.1" y2="372.0" stroke="rgb(63,144,246)" stroke-width="1.3"/><line x1="566.3" y1="380.0" x2="579.7" y2="373.0" stroke="rgb(63,144,246)" stroke-width="1.3"/><line x1="566.3" y1="380.0" x2="579.5" y2="373.4" stroke="rgb(63,144,246)" stroke-width="1.3"/><line x1="566.3" y1="380.0" x2="580.5" y2="373.2" stroke="rgb(63,144,246)" stroke-width="1.3"/><line x1="566.3" y1="380.0" x2="580.3" y2="373.6" stroke="rgb(63,144,246)" stroke-width="1.3"/><line x1="566.3" y1="380.0" x2="581.8" y2="373.1" stroke="rgb(63,144,246)" stroke-width="1.3"/><line x1="566.3" y1="380.0" x2="580.1" y2="374.2" stroke="rgb(63,144,246)" stroke-width="1.3"/><line x1="566.3" y1="380.0" x2="584.9" y2="372.5" stroke="rgb(63,144,246)" stroke-width="1.3"/><line x1="566.3" y1="380.0" x2="583.5" y2="373.3" stroke="rgb(63,144,246)" stroke-width="1.3"/><line x1="566.3" y1="380.0" x2="581.0" y2="374.6" stroke="rgb(63,144,246)" stroke-width="1.3"/><line x1="566.3" y1="380.0" x2="581.7" y2="374.6" stroke="rgb(63,144,246)" stroke-width="1.3"/><line x1="566.3" y1="380.0" x2="582.5" y2="374.6" stroke="rgb(59,133,246)" stroke-width="1.3"/><line x1="566.3" y1="380.0" x2="583.0" y2="374.7" stroke="rgb(53,117,246)" stroke-width="1.3"/><line x1="566.3" y1="380.0" x2="581.9" y2="375.4" stroke="rgb(48,101,246)" stroke-width="1.3"/><line x1="566.3" y1="380.0" x2="586.6" y2="374.3" stroke="rgb(42,85,246)" stroke-width="1.3"/><line x1="566.3" y1="380.0" x2="588.0" y2="374.3" stroke="rgb(36,68,246)" stroke-width="1.3"/><line x1="566.3" y1="380.0" x2="585.0" y2="375.4" stroke="rgb(30,52,246)" stroke-width="1.3"/><line x1="566.3" y1="380.0" x2="585.5" y2="375.6" stroke="rgb(25,36,246)" stroke-width="1.3"/><line x1="566.3" y1="380.0" x2="583.2" y2="376.4" stroke="rgb(19,20,246)" stroke-width="1.3"/><line x1="566.3" y1="380.0" x2="583.6" y2="376.6" stroke="rgb(13,4,246)" stroke-width="1.3"/><line x1="566.3" y1="380.0" x2="585.4" y2="376.5" stroke="rgb(12,0,246)" stroke-width="1.3"/><line x1="566.3" y1="380.0" x2="584.9" y2="376.9" stroke="rgb(12,0,246)" stroke-width="1.3"/><line x1="566.3" y1="380.0" x2="588.8" y2="376.6" stroke="rgb(12,0,246)" stroke-width="1.3"/><line x1="566.3" y1="380.0" x2="584.3" y2="377.6" stroke="rgb(12,0,246)" stroke-width="1.3"/><line x1="566.3" y1="380.0" x2="583.4" y2="378.0" stroke="rgb(12,0,246)" stroke-width="1.3"/><line x1="566.3" y1="380.0" x2="589.8" y2="377.6" stroke="rgb(12,0,246)" stroke-width="1.3"/><line x1="566.3" y1="380.0" x2="586.9" y2="378.2" stroke="rgb(12,0,246)" stroke-width="1.3"/><line x1="566.3" y1="380.0" x2="584.3" y2="378.7" stroke="rgb(12,0,246)" stroke-width="1.3"/><line x1="566.3" y1="380.0" x2="587.0" y2="378.9" stroke="rgb(12,0,246)" stroke-width="1.3"/><line x1="566.3" y1="380.0" x2="583.5" y2="379.3" stroke="rgb(12,0,246)" stroke-width="1.3"/><line x1="566.3" y1="380.0" x2="587.0" y2="379.5" stroke="rgb(12,0,246)" stroke-width="1.3"/><line x1="566.3" y1="380.0" x2="590.1" y2="379.8" stroke="rgb(12,0,246)" stroke-width="1.3"/><line x1="566.3" y1="380.0" x2="589.3" y2="380.2" stroke="rgb(12,0,246)" stroke-width="1.3"/><line x1="566.3" y1="380.0" x2="588.1" y2="380.5" stroke="rgb(12,0,246)" stroke-width="1.3"/><line x1="566.3" y1="380.0" x2="585.1" y2="380.8" stroke="rgb(12,0,246)" stroke-width="1.3"/><line x1="566.3" y1="380.0" x2="585.8" y2="381.1" stroke="rgb(12,0,246)" stroke-width="1.3"/><line x1="566.3" y1="380.0" x2="584.4" y2="381.3" stroke="rgb(12,0,246)" stroke-width="1.3"/><line x1="566.3" y1="380.0" x2="588.6" y2="381.9" stroke="rgb(12,0,246)" stroke-width="1.3"/><line x1="566.3" y1="380.0" x2="586.9" y2="382.1" stroke="rgb(12,0,246)" stroke-width="1.3"/><line x1="566.3" y1="380.0" x2="588.3" y2="382.6" stroke="rgb(21,2,244)" stroke-width="1.3"/><line x1="566.3" y1="380.0" x2="585.1" y2="382.5" stroke="rgb(32,4,241)" stroke-width="1.3"/><line x1="566.3" y1="380.0" x2="584.1" y2="382.7" stroke="rgb(43,6,239)" stroke-width="1.3"/><line x1="566.3" y1="380.0" x2="587.8" y2="383.6" stroke="rgb(53,9,236)" stroke-width="1.3"/><line x1="566.3" y1="380.0" x2="588.6" y2="384.1" stroke="rgb(64,11,234)" stroke-width="1.3"/><line x1="566.3" y1="380.0" x2="587.5" y2="384.2" stroke="rgb(74,13,231)" stroke-width="1.3"/><line x1="566.3" y1="380.0" x2="586.9" y2="384.5" stroke="rgb(85,15,229)" stroke-width="1.3"/><line x1="566.3" y1="380.0" x2="586.7" y2="384.7" stroke="rgb(95,18,226)" stroke-width="1.3"/><line x1="566.3" y1="380.0" x2="585.9" y2="384.9" stroke="rgb(106,20,224)" stroke-width="1.3"/><line x1="566.3" y1="380.0" x2="582.7" y2="384.4" stroke="rgb(106,20,224)" stroke-width="1.3"/><line x1="566.3" y1="380.0" x2="584.4" y2="385.1" stroke="rgb(106,20,224)" stroke-width="1.3"/><line x1="566.3" y1="380.0" x2="583.3" y2="385.1" stroke="rgb(106,20,224)" stroke-width="1.3"/><line x1="566.3" y1="380.0" x2="581.3" y2="384.8" stroke="rgb(106,20,224)" stroke-width="1.3"/><line x1="566.3" y1="380.0" x2="581.2" y2="385.0" stroke="rgb(106,20,224)" stroke-width="1.3"/><line x1="566.3" y1="380.0" x2="582.6" y2="385.7" stroke="rgb(106,20,224)" stroke-width="1.3"/><line x1="566.3" y1="380.0" x2="582.4" y2="386.0" stroke="rgb(106,20,224)" stroke-width="1.3"/><line x1="566.3" y1="380.0" x2="584.9" y2="387.2" stroke="rgb(106,20,224)" stroke-width="1.3"/><line x1="566.3" y1="380.0" x2="586.3" y2="388.1" stroke="rgb(106,20,224)" stroke-width="1.3"/><line x1="566.3" y1="380.0" x2="583.2" y2="387.2" stroke="rgb(106,20,224)" stroke-width="1.3"/><line x1="566.3" y1="380.0" x2="585.9" y2="388.7" stroke="rgb(106,20,224)" stroke-width="1.3"/><line x1="566.3" y1="380.0" x2="586.1" y2="389.1" stroke="rgb(106,20,224)" stroke-width="1.3"/><line x1="566.3" y1="380.0" x2="585.7" y2="389.3" stroke="rgb(106,20,224)" stroke-width="1.3"/><line x1="566.3" y1="380.0" x2="582.2" y2="388.0" stroke="rgb(106,20,224)" stroke-width="1.3"/><line x1="566.3" y1="380.0" x2="581.3" y2="387.8" stroke="rgb(106,20,224)" stroke-width="1.3"/><line x1="566.3" y1="380.0" x2="581.2" y2="388.1" stroke="rgb(106,20,224)" stroke-width="1.3"/><line x1="566.3" y1="380.0" x2="580.9" y2="388.2" stroke="rgb(106,20,224)" stroke-width="1.3"/><line x1="566.3" y1="380.0" x2="580.8" y2="388.5" stroke="rgb(106,20,224)" stroke-width="1.3"/><line x1="566.3" y1="380.0" x2="583.0" y2="390.1" stroke="rgb(106,20,224)" stroke-width="1.3"/><line x1="566.3" y1="380.0" x2="584.3" y2="391.2" stroke="rgb(106,20,224)" stroke-width="1.3"/><line x1="566.3" y1="380.0" x2="583.8" y2="391.3" stroke="rgb(106,20,224)" stroke-width="1.3"/><line x1="566.3" y1="380.0" x2="581.7" y2="390.3" stroke="rgb(106,20,224)" stroke-width="1.3"/><line x1="566.3" y1="380.0" x2="582.5" y2="391.2" stroke="rgb(106,20,224)" stroke-width="1.3"/><line x1="566.3" y1="380.0" x2="583.0" y2="392.0" stroke="rgb(106,20,224)" stroke-width="1.3"/><line x1="566.3" y1="380.0" x2="579.2" y2="389.6" stroke="rgb(106,20,224)" stroke-width="1.3"/><line x1="566.3" y1="380.0" x2="582.0" y2="392.0" stroke="rgb(106,20,224)" stroke-width="1.3"/><line x1="566.3" y1="380.0" x2="583.0" y2="393.2" stroke="rgb(106,20,224)" stroke-width="1.3"/><line x1="566.3" y1="380.0" x2="582.2" y2="392.9" stroke="rgb(106,20,224)" stroke-width="1.3"/><line x1="566.3" y1="380.0" x2="581.8" y2="393.1" stroke="rgb(106,20,224)" stroke-width="1.3"/><line x1="566.3" y1="380.0" x2="580.3" y2="392.2" stroke="rgb(106,20,224)" stroke-width="1.3"/><line x1="566.3" y1="380.0" x2="578.6" y2="391.1" stroke="rgb(106,20,214)" stroke-width="1.3"/><line x1="566.3" y1="380.0" x2="581.2" y2="393.8" stroke="rgb(106,20,205)" stroke-width="1.3"/><line x1="566.3" y1="380.0" x2="578.8" y2="392.0" stroke="rgb(106,20,195)" stroke-width="1.3"/><line x1="566.3" y1="380.0" x2="580.6" y2="394.1" stroke="rgb(106,20,185)" stroke-width="1.3"/><line x1="566.3" y1="380.0" x2="581.1" y2="395.0" stroke="rgb(106,19,176)" stroke-width="1.3"/><line x1="566.3" y1="380.0" x2="578.3" y2="392.6" stroke="rgb(106,19,166)" stroke-width="1.3"/><line x1="566.3" y1="380.0" x2="578.1" y2="392.8" stroke="rgb(106,19,156)" stroke-width="1.3"/><line x1="566.3" y1="380.0" x2="580.0" y2="395.3" stroke="rgb(106,19,147)" stroke-width="1.3"/><line x1="566.3" y1="380.0" x2="578.8" y2="394.5" stroke="rgb(106,19,138)" stroke-width="1.3"/><line x1="566.3" y1="380.0" x2="576.5" y2="392.1" stroke="rgb(106,19,138)" stroke-width="1.3"/><line x1="566.3" y1="380.0" x2="576.1" y2="392.1" stroke="rgb(106,19,138)" stroke-width="1.3"/><line x1="566.3" y1="380.0" x2="576.0" y2="392.3" stroke="rgb(106,19,138)" stroke-width="1.3"/><line x1="566.3" y1="380.0" x2="578.6" y2="396.1" stroke="rgb(106,19,138)" stroke-width="1.3"/><line x1="566.3" y1="380.0" x2="578.0" y2="395.8" stroke="rgb(106,19,138)" stroke-width="1.3"/><line x1="566.3" y1="380.0" x2="575.4" y2="392.8" stroke="rgb(106,19,138)" stroke-width="1.3"/><line x1="566.3" y1="380.0" x2="577.5" y2="396.3" stroke="rgb(106,19,138)" stroke-width="1.3"/><line x1="566.3" y1="380.0" x2="577.8" y2="397.2" stroke="rgb(106,19,138)" stroke-width="1.3"/><line x1="566.3" y1="380.0" x2="576.5" y2="395.8" stroke="rgb(106,19,138)" stroke-width="1.3"/><line x1="566.3" y1="380.0" x2="575.2" y2="394.3" stroke="rgb(106,19,138)" stroke-width="1.3"/><line x1="566.3" y1="380.0" x2="575.6" y2="395.5" stroke="rgb(106,19,138)" stroke-width="1.3"/><line x1="566.3" y1="380.0" x2="574.1" y2="393.5" stroke="rgb(106,19,138)" stroke-width="1.3"/><line x1="566.3" y1="380.0" x2="573.6" y2="393.0" stroke="rgb(106,19,138)" stroke-width="1.3"/><line x1="566.3" y1="380.0" x2="576.1" y2="398.2" stroke="rgb(106,19,138)" stroke-width="1.3"/><line x1="566.3" y1="380.0" x2="574.9" y2="396.6" stroke="rgb(106,19,138)" stroke-width="1.3"/><line x1="566.3" y1="380.0" x2="574.3" y2="396.1" stroke="rgb(106,19,138)" stroke-width="1.3"/><line x1="566.3" y1="380.0" x2="575.1" y2="398.4" stroke="rgb(106,19,138)" stroke-width="1.3"/><line x1="566.3" y1="380.0" x2="573.6" y2="395.8" stroke="rgb(106,19,138)" stroke-width="1.3"/><line x1="566.3" y1="380.0" x2="574.5" y2="398.5" stroke="rgb(107,19,135)" stroke-width="1.3"/><line x1="566.3" y1="380.0" x2="574.4" y2="399.1" stroke="rgb(114,20,122)" stroke-width="1.3"/><line x1="566.3" y1="380.0" x2="572.8" y2="396.2" stroke="rgb(120,21,109)" stroke-width="1.3"/><line x1="566.3" y1="380.0" x2="572.9" y2="397.1" stroke="rgb(127,22,96)" stroke-width="1.3"/><line x1="566.3" y1="380.0" x2="573.0" y2="398.1" stroke="rgb(133,23,83)" stroke-width="1.3"/><line x1="566.3" y1="380.0" x2="572.8" y2="398.5" stroke="rgb(139,24,70)" stroke-width="1.3"/><line x1="566.3" y1="380.0" x2="573.5" y2="401.6" stroke="rgb(146,25,58)" stroke-width="1.3"/><line x1="566.3" y1="380.0" x2="572.6" y2="400.0" stroke="rgb(152,26,45)" stroke-width="1.3"/><line x1="566.3" y1="380.0" x2="572.8" y2="402.0" stroke="rgb(159,27,32)" stroke-width="1.3"/><line x1="566.3" y1="380.0" x2="572.0" y2="400.3" stroke="rgb(163,28,23)" stroke-width="1.3"/><line x1="566.3" y1="380.0" x2="573.3" y2="406.4" stroke="rgb(163,28,23)" stroke-width="1.3"/><line x1="566.3" y1="380.0" x2="571.8" y2="402.2" stroke="rgb(163,28,23)" stroke-width="1.3"/><line x1="566.3" y1="380.0" x2="571.6" y2="403.1" stroke="rgb(163,28,23)" stroke-width="1.3"/><line x1="566.3" y1="380.0" x2="571.5" y2="404.2" stroke="rgb(163,28,23)" stroke-width="1.3"/><line x1="566.3" y1="380.0" x2="571.6" y2="406.8" stroke="rgb(163,28,23)" stroke-width="1.3"/><line x1="566.3" y1="380.0" x2="570.5" y2="403.0" stroke="rgb(163,28,23)" stroke-width="1.3"/><line x1="566.3" y1="380.0" x2="570.8" y2="407.0" stroke="rgb(163,28,23)" stroke-width="1.3"/><line x1="566.3" y1="380.0" x2="569.9" y2="403.8" stroke="rgb(163,28,23)" stroke-width="1.3"/><line x1="566.3" y1="380.0" x2="569.5" y2="404.1" stroke="rgb(163,28,23)" stroke-width="1.3"/><line x1="566.3" y1="380.0" x2="569.1" y2="404.1" stroke="rgb(163,28,23)" stroke-width="1.3"/><line x1="566.3" y1="380.0" x2="568.3" y2="400.0" stroke="rgb(163,28,23)" stroke-width="1.3"/><line x1="566.3" y1="380.0" x2="568.3" y2="403.5" stroke="rgb(163,28,23)" stroke-width="1.3"/><line x1="566.3" y1="380.0" x2="567.8" y2="401.4" stroke="rgb(163,28,23)" stroke-width="1.3"/><line x1="566.3" y1="380.0" x2="567.4" y2="400.0" stroke="rgb(163,28,23)" stroke-width="1.3"/><line x1="566.3" y1="380.0" x2="567.3" y2="406.4" stroke="rgb(163,28,23)" stroke-width="1.3"/><line x1="566.3" y1="380.0" x2="566.8" y2="401.4" stroke="rgb(163,28,23)" stroke-width="1.3"/><line x1="566.3" y1="380.0" x2="566.5" y2="403.8" stroke="rgb(163,28,23)" stroke-width="1.3"/><line x1="566.3" y1="380.0" x2="566.1" y2="405.9" stroke="rgb(163,28,23)" stroke-width="1.3"/><line x1="566.3" y1="380.0" x2="565.7" y2="404.5" stroke="rgb(163,28,23)" stroke-width="1.3"/><line x1="566.3" y1="380.0" x2="565.4" y2="402.6" stroke="rgb(163,28,23)" stroke-width="1.3"/><line x1="566.3" y1="380.0" x2="565.0" y2="404.1" stroke="rgb(163,28,23)" stroke-width="1.3"/><line x1="566.3" y1="380.0" x2="564.5" y2="404.4" stroke="rgb(163,28,23)" stroke-width="1.3"/><line x1="566.3" y1="380.0" x2="564.0" y2="406.2" stroke="rgb(163,28,23)" stroke-width="1.3"/><line x1="566.3" y1="380.0" x2="564.2" y2="400.7" stroke="rgb(163,28,23)" stroke-width="1.3"/><line x1="566.3" y1="380.0" x2="563.4" y2="404.4" stroke="rgb(169,29,24)" stroke-width="1.3"/><line x1="566.3" y1="380.0" x2="563.3" y2="401.9" stroke="rgb(176,31,25)" stroke-width="1.3"/><line x1="566.3" y1="380.0" x2="563.0" y2="402.1" stroke="rgb(183,33,26)" stroke-width="1.3"/><line x1="566.3" y1="380.0" x2="561.9" y2="406.1" stroke="rgb(190,34,27)" stroke-width="1.3"/><line x1="566.3" y1="380.0" x2="561.9" y2="403.9" stroke="rgb(197,36,28)" stroke-width="1.3"/><line x1="566.3" y1="380.0" x2="561.4" y2="404.3" stroke="rgb(203,37,29)" stroke-width="1.3"/><line x1="566.3" y1="380.0" x2="560.7" y2="405.9" stroke="rgb(210,39,30)" stroke-width="1.3"/><line x1="566.3" y1="380.0" x2="560.0" y2="407.1" stroke="rgb(217,40,31)" stroke-width="1.3"/><line x1="566.3" y1="380.0" x2="560.5" y2="403.3" stroke="rgb(224,42,32)" stroke-width="1.3"/><line x1="566.3" y1="380.0" x2="559.8" y2="404.5" stroke="rgb(224,42,32)" stroke-width="1.3"/><line x1="566.3" y1="380.0" x2="559.6" y2="403.6" stroke="rgb(224,42,32)" stroke-width="1.3"/><line x1="566.3" y1="380.0" x2="559.2" y2="403.5" stroke="rgb(224,42,32)" stroke-width="1.3"/><line x1="566.3" y1="380.0" x2="558.4" y2="404.8" stroke="rgb(224,42,32)" stroke-width="1.3"/><line x1="566.3" y1="380.0" x2="558.7" y2="402.8" stroke="rgb(224,42,32)" stroke-width="1.3"/><line x1="566.3" y1="380.0" x2="558.1" y2="403.3" stroke="rgb(224,42,32)" stroke-width="1.3"/><line x1="566.3" y1="380.0" x2="557.9" y2="402.8" stroke="rgb(224,42,32)" stroke-width="1.3"/><line x1="566.3" y1="380.0" x2="556.1" y2="406.2" stroke="rgb(224,42,32)" stroke-width="1.3"/><line x1="566.3" y1="380.0" x2="556.5" y2="404.2" stroke="rgb(224,42,32)" stroke-width="1.3"/><line x1="566.3" y1="380.0" x2="555.5" y2="405.4" stroke="rgb(224,42,32)" stroke-width="1.3"/><line x1="566.3" y1="380.0" x2="554.9" y2="405.7" stroke="rgb(224,42,32)" stroke-width="1.3"/><line x1="566.3" y1="380.0" x2="556.9" y2="400.4" stroke="rgb(224,42,32)" stroke-width="1.3"/><line x1="566.3" y1="380.0" x2="555.5" y2="402.5" stroke="rgb(224,42,32)" stroke-width="1.3"/><line x1="566.3" y1="380.0" x2="553.7" y2="405.2" stroke="rgb(224,42,32)" stroke-width="1.3"/><line x1="566.3" y1="380.0" x2="553.7" y2="404.2" stroke="rgb(224,42,32)" stroke-width="1.3"/><line x1="566.3" y1="380.0" x2="556.1" y2="398.9" stroke="rgb(224,42,32)" stroke-width="1.3"/><line x1="566.3" y1="380.0" x2="555.9" y2="398.6" stroke="rgb(224,42,32)" stroke-width="1.3"/><line x1="566.3" y1="380.0" x2="554.2" y2="400.7" stroke="rgb(224,42,32)" stroke-width="1.3"/><line x1="566.3" y1="380.0" x2="555.5" y2="397.9" stroke="rgb(224,42,32)" stroke-width="1.3"/><line x1="566.3" y1="380.0" x2="554.5" y2="398.9" stroke="rgb(224,42,32)" stroke-width="1.3"/><line x1="566.3" y1="380.0" x2="554.9" y2="397.6" stroke="rgb(224,42,32)" stroke-width="1.3"/><line x1="566.3" y1="380.0" x2="551.9" y2="401.5" stroke="rgb(224,42,32)" stroke-width="1.3"/><line x1="566.3" y1="380.0" x2="551.0" y2="402.0" stroke="rgb(224,42,32)" stroke-width="1.3"/><line x1="566.3" y1="380.0" x2="550.1" y2="402.6" stroke="rgb(224,42,32)" stroke-width="1.3"/><line x1="566.3" y1="380.0" x2="553.4" y2="397.4" stroke="rgb(224,42,32)" stroke-width="1.3"/><line x1="566.3" y1="380.0" x2="550.4" y2="400.9" stroke="rgb(224,42,32)" stroke-width="1.3"/><line x1="566.3" y1="380.0" x2="550.3" y2="400.2" stroke="rgb(224,42,32)" stroke-width="1.3"/><line x1="566.3" y1="380.0" x2="552.7" y2="396.7" stroke="rgb(224,42,32)" stroke-width="1.3"/><line x1="566.3" y1="380.0" x2="548.5" y2="401.1" stroke="rgb(224,42,32)" stroke-width="1.3"/><line x1="566.3" y1="380.0" x2="547.7" y2="401.4" stroke="rgb(224,42,32)" stroke-width="1.3"/><line x1="566.3" y1="380.0" x2="551.5" y2="396.5" stroke="rgb(224,42,32)" stroke-width="1.3"/><line x1="566.3" y1="380.0" x2="547.1" y2="400.7" stroke="rgb(224,42,32)" stroke-width="1.3"/><line x1="566.3" y1="380.0" x2="550.0" y2="397.1" stroke="rgb(224,42,32)" stroke-width="1.3"/><line x1="566.3" y1="380.0" x2="549.2" y2="397.4" stroke="rgb(224,42,32)" stroke-width="1.3"/><line x1="566.3" y1="380.0" x2="546.0" y2="400.0" stroke="rgb(224,42,32)" stroke-width="1.3"/><line x1="566.3" y1="380.0" x2="546.7" y2="398.7" stroke="rgb(224,42,32)" stroke-width="1.3"/><line x1="566.3" y1="380.0" x2="550.7" y2="394.4" stroke="rgb(226,43,33)" stroke-width="1.3"/><line x1="566.3" y1="380.0" x2="549.1" y2="395.4" stroke="rgb(227,43,33)" stroke-width="1.3"/><line x1="566.3" y1="380.0" x2="548.6" y2="395.3" stroke="rgb(228,44,34)" stroke-width="1.3"/><line x1="566.3" y1="380.0" x2="549.7" y2="393.9" stroke="rgb(229,44,34)" stroke-width="1.3"/><line x1="566.3" y1="380.0" x2="550.6" y2="392.8" stroke="rgb(230,45,34)" stroke-width="1.3"/><line x1="566.3" y1="380.0" x2="549.9" y2="392.9" stroke="rgb(231,46,35)" stroke-width="1.3"/><line x1="566.3" y1="380.0" x2="547.6" y2="394.2" stroke="rgb(232,46,35)" stroke-width="1.3"/><line x1="566.3" y1="380.0" x2="551.8" y2="390.7" stroke="rgb(234,47,36)" stroke-width="1.3"/><line x1="566.3" y1="380.0" x2="548.6" y2="392.6" stroke="rgb(234,47,36)" stroke-width="1.3"/><line x1="566.3" y1="380.0" x2="549.1" y2="391.9" stroke="rgb(234,47,36)" stroke-width="1.3"/><line x1="566.3" y1="380.0" x2="551.4" y2="389.9" stroke="rgb(234,47,36)" stroke-width="1.3"/><line x1="566.3" y1="380.0" x2="549.4" y2="390.9" stroke="rgb(234,47,36)" stroke-width="1.3"/><line x1="566.3" y1="380.0" x2="547.4" y2="391.8" stroke="rgb(234,47,36)" stroke-width="1.3"/><line x1="566.3" y1="380.0" x2="547.9" y2="391.0" stroke="rgb(234,47,36)" stroke-width="1.3"/><line x1="566.3" y1="380.0" x2="550.5" y2="389.1" stroke="rgb(234,47,36)" stroke-width="1.3"/><line x1="566.3" y1="380.0" x2="544.6" y2="392.1" stroke="rgb(234,47,36)" stroke-width="1.3"/><line x1="566.3" y1="380.0" x2="545.7" y2="391.1" stroke="rgb(234,47,36)" stroke-width="1.3"/><line x1="566.3" y1="380.0" x2="544.3" y2="391.4" stroke="rgb(234,47,36)" stroke-width="1.3"/><line x1="566.3" y1="380.0" x2="549.7" y2="388.3" stroke="rgb(234,47,36)" stroke-width="1.3"/><line x1="566.3" y1="380.0" x2="548.6" y2="388.5" stroke="rgb(234,47,36)" stroke-width="1.3"/><line x1="566.3" y1="380.0" x2="549.9" y2="387.5" stroke="rgb(234,47,36)" stroke-width="1.3"/><line x1="566.3" y1="380.0" x2="544.9" y2="389.4" stroke="rgb(234,47,36)" stroke-width="1.3"/><line x1="566.3" y1="380.0" x2="548.1" y2="387.7" stroke="rgb(234,47,36)" stroke-width="1.3"/><line x1="566.3" y1="380.0" x2="549.0" y2="387.0" stroke="rgb(234,47,36)" stroke-width="1.3"/><line x1="566.3" y1="380.0" x2="546.9" y2="387.5" stroke="rgb(234,47,36)" stroke-width="1.3"/><line x1="566.3" y1="380.0" x2="543.5" y2="388.4" stroke="rgb(234,47,36)" stroke-width="1.3"/><line x1="566.3" y1="380.0" x2="544.0" y2="387.8" stroke="rgb(234,47,36)" stroke-width="1.3"/><line x1="566.3" y1="380.0" x2="547.7" y2="386.2" stroke="rgb(234,47,36)" stroke-width="1.3"/><line x1="566.3" y1="380.0" x2="548.3" y2="385.7" stroke="rgb(234,47,36)" stroke-width="1.3"/><line x1="566.3" y1="380.0" x2="542.9" y2="387.0" stroke="rgb(234,47,36)" stroke-width="1.3"/><line x1="566.3" y1="380.0" x2="545.2" y2="385.9" stroke="rgb(234,47,36)" stroke-width="1.3"/><line x1="566.3" y1="380.0" x2="544.3" y2="385.8" stroke="rgb(234,47,36)" stroke-width="1.3"/><line x1="566.3" y1="380.0" x2="548.4" y2="384.4" stroke="rgb(234,47,36)" stroke-width="1.3"/><line x1="566.3" y1="380.0" x2="548.6" y2="384.1" stroke="rgb(234,47,36)" stroke-width="1.3"/><line x1="566.3" y1="380.0" x2="544.1" y2="384.8" stroke="rgb(234,47,36)" stroke-width="1.3"/><line x1="566.3" y1="380.0" x2="545.9" y2="384.0" stroke="rgb(234,47,36)" stroke-width="1.3"/><line x1="566.3" y1="380.0" x2="548.3" y2="383.3" stroke="rgb(234,47,36)" stroke-width="1.3"/><line x1="566.3" y1="380.0" x2="542.1" y2="384.0" stroke="rgb(234,47,36)" stroke-width="1.3"/><line x1="566.3" y1="380.0" x2="544.4" y2="383.3" stroke="rgb(234,52,37)" stroke-width="1.3"/><line x1="566.3" y1="380.0" x2="543.7" y2="383.0" stroke="rgb(235,61,38)" stroke-width="1.3"/><line x1="566.3" y1="380.0" x2="548.9" y2="382.0" stroke="rgb(235,70,39)" stroke-width="1.3"/><line x1="566.3" y1="380.0" x2="544.1" y2="382.3" stroke="rgb(236,79,40)" stroke-width="1.3"/><line x1="566.3" y1="380.0" x2="549.7" y2="381.4" stroke="rgb(236,88,42)" stroke-width="1.3"/><line x1="566.3" y1="380.0" x2="544.9" y2="381.5" stroke="rgb(236,97,43)" stroke-width="1.3"/><line x1="566.3" y1="380.0" x2="547.9" y2="381.0" stroke="rgb(237,106,44)" stroke-width="1.3"/><line x1="566.3" y1="380.0" x2="549.0" y2="380.7" stroke="rgb(237,115,45)" stroke-width="1.3"/><line x1="566.3" y1="380.0" x2="548.1" y2="380.4" stroke="rgb(238,124,47)" stroke-width="1.3"/><line x1="566.3" y1="380.0" x2="545.9" y2="380.1" stroke="rgb(238,127,47)" stroke-width="1.3"/><line x1="566.3" y1="380.0" x2="549.9" y2="379.9" stroke="rgb(238,127,47)" stroke-width="1.3"/><line x1="566.3" y1="380.0" x2="550.7" y2="379.6" stroke="rgb(238,127,47)" stroke-width="1.3"/><line x1="566.3" y1="380.0" x2="548.4" y2="379.3" stroke="rgb(238,127,47)" stroke-width="1.3"/><line x1="566.3" y1="380.0" x2="550.1" y2="379.1" stroke="rgb(238,127,47)" stroke-width="1.3"/><line x1="566.3" y1="380.0" x2="550.9" y2="378.9" stroke="rgb(238,127,47)" stroke-width="1.3"/><line x1="566.3" y1="380.0" x2="550.6" y2="378.6" stroke="rgb(238,127,47)" stroke-width="1.3"/><line x1="566.3" y1="380.0" x2="551.3" y2="378.4" stroke="rgb(238,127,47)" stroke-width="1.3"/><line x1="566.3" y1="380.0" x2="550.4" y2="378.1" stroke="rgb(238,127,47)" stroke-width="1.3"/><line x1="566.3" y1="380.0" x2="549.8" y2="377.8" stroke="rgb(238,127,47)" stroke-width="1.3"/><line x1="566.3" y1="380.0" x2="549.9" y2="377.5" stroke="rgb(238,127,47)" stroke-width="1.3"/><line x1="566.3" y1="380.0" x2="547.2" y2="376.8" stroke="rgb(238,127,47)" stroke-width="1.3"/><line x1="566.3" y1="380.0" x2="550.0" y2="377.0" stroke="rgb(238,127,47)" stroke-width="1.3"/><line x1="566.3" y1="380.0" x2="548.9" y2="376.5" stroke="rgb(239,131,48)" stroke-width="1.3"/><line x1="566.3" y1="380.0" x2="550.9" y2="376.7" stroke="rgb(240,144,52)" stroke-width="1.3"/><line x1="566.3" y1="380.0" x2="550.1" y2="376.2" stroke="rgb(242,157,55)" stroke-width="1.3"/><line x1="566.3" y1="380.0" x2="552.1" y2="376.5" stroke="rgb(244,169,59)" stroke-width="1.3"/><line x1="566.3" y1="380.0" x2="550.9" y2="375.9" stroke="rgb(245,182,63)" stroke-width="1.3"/><line x1="566.3" y1="380.0" x2="552.4" y2="376.1" stroke="rgb(247,195,66)" stroke-width="1.3"/><line x1="566.3" y1="380.0" x2="548.6" y2="374.7" stroke="rgb(249,208,70)" stroke-width="1.3"/><line x1="566.3" y1="380.0" x2="549.8" y2="374.8" stroke="rgb(250,220,73)" stroke-width="1.3"/><line x1="566.3" y1="380.0" x2="551.9" y2="375.2" stroke="rgb(252,233,77)" stroke-width="1.3"/><line x1="566.3" y1="380.0" x2="550.5" y2="374.4" stroke="rgb(253,240,79)" stroke-width="1.3"/><line x1="566.3" y1="380.0" x2="548.1" y2="373.3" stroke="rgb(253,240,79)" stroke-width="1.3"/><line x1="566.3" y1="380.0" x2="552.6" y2="374.7" stroke="rgb(253,240,79)" stroke-width="1.3"/><line x1="566.3" y1="380.0" x2="548.9" y2="373.0" stroke="rgb(253,240,79)" stroke-width="1.3"/><line x1="566.3" y1="380.0" x2="551.1" y2="373.5" stroke="rgb(253,240,79)" stroke-width="1.3"/><line x1="566.3" y1="380.0" x2="550.9" y2="373.2" stroke="rgb(253,240,79)" stroke-width="1.3"/><line x1="566.3" y1="380.0" x2="549.2" y2="372.1" stroke="rgb(253,240,79)" stroke-width="1.3"/><line x1="566.3" y1="380.0" x2="551.6" y2="372.9" stroke="rgb(253,240,79)" stroke-width="1.3"/><line x1="566.3" y1="380.0" x2="551.1" y2="372.4" stroke="rgb(253,240,79)" stroke-width="1.3"/><line x1="566.3" y1="380.0" x2="550.4" y2="371.7" stroke="rgb(253,240,79)" stroke-width="1.3"/><line x1="566.3" y1="380.0" x2="549.0" y2="370.6" stroke="rgb(253,240,79)" stroke-width="1.3"/><line x1="566.3" y1="380.0" x2="552.3" y2="372.1" stroke="rgb(250,240,79)" stroke-width="1.3"/><line x1="566.3" y1="380.0" x2="549.9" y2="370.4" stroke="rgb(243,242,78)" stroke-width="1.3"/><line x1="566.3" y1="380.0" x2="550.5" y2="370.5" stroke="rgb(235,243,78)" stroke-width="1.3"/><line x1="566.3" y1="380.0" x2="550.9" y2="370.4" stroke="rgb(228,244,78)" stroke-width="1.3"/><line x1="566.3" y1="380.0" x2="552.0" y2="370.8" stroke="rgb(220,245,77)" stroke-width="1.3"/><line x1="566.3" y1="380.0" x2="552.3" y2="370.7" stroke="rgb(212,247,77)" stroke-width="1.3"/><line x1="566.3" y1="380.0" x2="553.8" y2="371.4" stroke="rgb(205,248,76)" stroke-width="1.3"/><line x1="566.3" y1="380.0" x2="553.5" y2="370.8" stroke="rgb(197,249,76)" stroke-width="1.3"/><line x1="566.3" y1="380.0" x2="553.8" y2="370.8" stroke="rgb(189,250,75)" stroke-width="1.3"/><line x1="566.3" y1="380.0" x2="550.6" y2="368.0" stroke="rgb(185,251,75)" stroke-width="1.3"/><line x1="566.3" y1="380.0" x2="553.2" y2="369.6" stroke="rgb(185,251,75)" stroke-width="1.3"/><line x1="566.3" y1="380.0" x2="553.8" y2="369.8" stroke="rgb(185,251,75)" stroke-width="1.3"/><line x1="566.3" y1="380.0" x2="554.3" y2="369.9" stroke="rgb(185,251,75)" stroke-width="1.3"/><line x1="566.3" y1="380.0" x2="550.9" y2="366.7" stroke="rgb(185,251,75)" stroke-width="1.3"/><line x1="566.3" y1="380.0" x2="551.0" y2="366.3" stroke="rgb(185,251,75)" stroke-width="1.3"/><line x1="566.3" y1="380.0" x2="552.1" y2="366.9" stroke="rgb(185,251,75)" stroke-width="1.3"/><line x1="566.3" y1="380.0" x2="554.1" y2="368.3" stroke="rgb(185,251,75)" stroke-width="1.3"/><line x1="566.3" y1="380.0" x2="554.4" y2="368.3" stroke="rgb(185,251,75)" stroke-width="1.3"/><line x1="566.3" y1="380.0" x2="554.4" y2="367.9" stroke="rgb(185,251,75)" stroke-width="1.3"/><line x1="566.3" y1="380.0" x2="553.7" y2="366.8" stroke="rgb(182,251,75)" stroke-width="1.3"/><line x1="566.3" y1="380.0" x2="554.8" y2="367.5" stroke="rgb(175,251,75)" stroke-width="1.3"/><line x1="566.3" y1="380.0" x2="553.3" y2="365.5" stroke="rgb(168,251,75)" stroke-width="1.3"/><line x1="566.3" y1="380.0" x2="554.0" y2="365.8" stroke="rgb(161,251,75)" stroke-width="1.3"/></svg>
<div class="t l8" style="left:550px;top:269.40000000000003px;width:30px;text-align:center;font-weight:normal;color:#262626">C</div>
<div class="t l8" style="left:605px;top:284.5px;width:30px;text-align:center;font-weight:normal;color:#262626">C#</div>
<div class="t l8" style="left:642.1px;top:322.0px;width:30px;text-align:center;font-weight:normal;color:#262626">D</div>
<div class="t l8" style="left:657.8px;top:375.3px;width:30px;text-align:center;font-weight:normal;color:#262626">D#</div>
<div class="t l8" style="left:643.4px;top:427.90000000000003px;width:30px;text-align:center;font-weight:normal;color:#262626">E</div>
<div class="t l8" style="left:605.1px;top:467.3px;width:30px;text-align:center;font-weight:normal;color:#262626">F</div>
<div class="t l8" style="left:552px;top:481.5px;width:30px;text-align:center;font-weight:normal;color:#262626">F#</div>
<div class="t l8" style="left:497.9px;top:467.90000000000003px;width:30px;text-align:center;font-weight:normal;color:#262626">G</div>
<div class="t l8" style="left:458px;top:430.0px;width:30px;text-align:center;font-weight:normal;color:#262626">G#</div>
<div class="t l8" style="left:445.2px;top:376.1px;width:30px;text-align:center;font-weight:normal;color:#262626">A</div>
<div class="t l8" style="left:458px;top:322.0px;width:30px;text-align:center;font-weight:normal;color:#262626">A#</div>
<div class="t l8" style="left:497.4px;top:284.90000000000003px;width:30px;text-align:center;font-weight:normal;color:#262626">B</div>
<div class="t l9" style="left:0px;top:498.7px;width:75.3px;text-align:right;">MIDI Synth:</div>
<div class="t l9" style="left:0px;top:518.5px;width:75.3px;text-align:right;">MIDI Channel:</div>
<div class="t l9" style="left:0px;top:537.6px;width:75.3px;text-align:right;">Synth Voice:</div>
<div class="dd" style="left:77px;top:496.7px;width:89px;height:16.6px"><span>AU DLS Synth 1</span><i></i></div>
<div class="nb" style="left:77px;top:516.3px;width:39px;height:16.4px;"><i></i><span>1</span></div>
<div class="dd" style="left:77px;top:535.4px;width:140.2px;height:16.4px"><span>Acoustic Grand Piano</span><i></i></div>
<div class="t l87" style="left:100px;top:497.8px;width:101px;text-align:right;">synth &gt;</div>
<div class="t l87" style="left:100px;top:517.8px;width:101.3px;text-align:right;">reverb &gt;</div>
<div class="cb" style="left:204.7px;top:496.7px;width:12.5px;height:12.2px"><svg width="10.5" height="10.2" viewBox="0 0 10.5 10.2" style="position:absolute;left:0;top:0"><path d="M1.800 1.700L8.700 8.500M8.700 1.700L1.800 8.500" stroke="#5c5c5c" stroke-width="1.1"/></svg></div>
<div class="cb" style="left:204.7px;top:515.8px;width:12.5px;height:12.2px"><svg width="10.5" height="10.2" viewBox="0 0 10.5 10.2" style="position:absolute;left:0;top:0"><path d="M1.800 1.700L8.700 8.500M8.700 1.700L1.800 8.500" stroke="#fff" stroke-width="1.5"/></svg></div>
<div class="cb" style="left:310.3px;top:496.7px;width:12.5px;height:12.2px"><svg width="10.5" height="10.2" viewBox="0 0 10.5 10.2" style="position:absolute;left:0;top:0"><path d="M1.800 1.700L8.700 8.500M8.700 1.700L1.800 8.500" stroke="#5c5c5c" stroke-width="1.1"/></svg></div>
<div class="abs" style="left:221px;top:539px;width:10.5px;height:10.5px;border-radius:50%;border:1px solid #333"></div>
<div class="t l87" style="left:235.3px;top:540.3px;">&lt; all notes off</div>
<div class="t l87" style="left:200px;top:499.3px;width:106.7px;text-align:right;">track deviation &gt;</div>
<div class="t l87" style="left:200px;top:516.7px;width:106.7px;text-align:right;">transposition &gt;</div>
<div class="t l87" style="left:200px;top:526.6px;width:106.7px;text-align:right;">scale &gt;</div>
<div class="dd" style="left:310.3px;top:515.8px;width:108.4px;height:17px"><span>chromatic</span><i></i></div>
<div class="dd" style="left:310.3px;top:535.4px;width:49px;height:16.4px"><span>-2oct</span><i></i></div>
<div class="t l9" style="left:400px;top:498.7px;width:91.3px;text-align:right;">MIDI Color:</div>
<div class="dd" style="left:493px;top:496.7px;width:89px;height:16.6px"><span>AU DLS Synth 1</span><i></i></div>
<div class="t l9" style="left:400px;top:537.6px;width:90.3px;text-align:right;">Channel:</div>
<div class="nb" style="left:493px;top:535.4px;width:39px;height:16.4px;"><i></i><span>1</span></div>
<div class="t l9" style="left:480px;top:518.5px;width:102.5px;text-align:right;">Values R:</div>
<div class="t l9" style="left:480px;top:537.6px;width:102.5px;text-align:right;">Control R:</div>
<div class="t l9" style="left:623px;top:498.3px;font-size:12.6px;font-weight:normal;color:#222">ColorSynth 1</div>
<div class="nb" style="left:585px;top:516.3px;width:38.8px;height:16.4px;"><i></i><span>127</span></div>
<div class="nb" style="left:640.3px;top:516.3px;width:38.9px;height:16.4px;"><i></i><span>84</span></div>
<div class="nb" style="left:694.8px;top:516.3px;width:39.3px;height:16.4px;"><i></i><span>0</span></div>
<div class="t l9" style="left:628.3px;top:518.5px;">G:</div>
<div class="t l9" style="left:683.8px;top:518.5px;">B:</div>
<div class="nb" style="left:585px;top:535.4px;width:38.8px;height:16.4px;"><i></i><span>14</span></div>
<div class="nb" style="left:640.3px;top:535.4px;width:38.9px;height:16.4px;"><i></i><span>15</span></div>
<div class="nb" style="left:694.8px;top:535.4px;width:39.3px;height:16.4px;"><i></i><span>16</span></div>
<div class="t l9" style="left:628.3px;top:537.6px;">G:</div>
<div class="t l9" style="left:683.8px;top:537.6px;">B:</div>
<div class="t l9" style="left:700px;top:537.6px;width:79.2px;text-align:right;">Channel:</div>
<div class="nb" style="left:781.7px;top:535.4px;width:39.5px;height:16.4px;"><i></i><span>2</span></div>
<div class="t l9" style="left:770px;top:518.5px;width:101.3px;text-align:right;">Values R:</div>
<div class="t l9" style="left:770px;top:537.6px;width:101.3px;text-align:right;">Control R:</div>
<div class="t l9" style="left:911.2px;top:498.3px;font-size:12.6px;font-weight:normal;color:#222">ColorSynth 2</div>
<div class="nb" style="left:873.7px;top:516.3px;width:38.8px;height:16.4px;"><i></i><span>0</span></div>
<div class="nb" style="left:929px;top:516.3px;width:38.9px;height:16.4px;"><i></i><span>42</span></div>
<div class="nb" style="left:983.3px;top:516.3px;width:39.3px;height:16.4px;"><i></i><span>127</span></div>
<div class="t l9" style="left:917px;top:518.5px;">G:</div>
<div class="t l9" style="left:972.5px;top:518.5px;">B:</div>
<div class="nb" style="left:873.7px;top:535.4px;width:38.8px;height:16.4px;"><i></i><span>14</span></div>
<div class="nb" style="left:929px;top:535.4px;width:38.9px;height:16.4px;"><i></i><span>15</span></div>
<div class="nb" style="left:983.3px;top:535.4px;width:39.3px;height:16.4px;"><i></i><span>16</span></div>
<div class="t l9" style="left:917px;top:537.6px;">G:</div>
<div class="t l9" style="left:972.5px;top:537.6px;">B:</div>
</div></body></html>
